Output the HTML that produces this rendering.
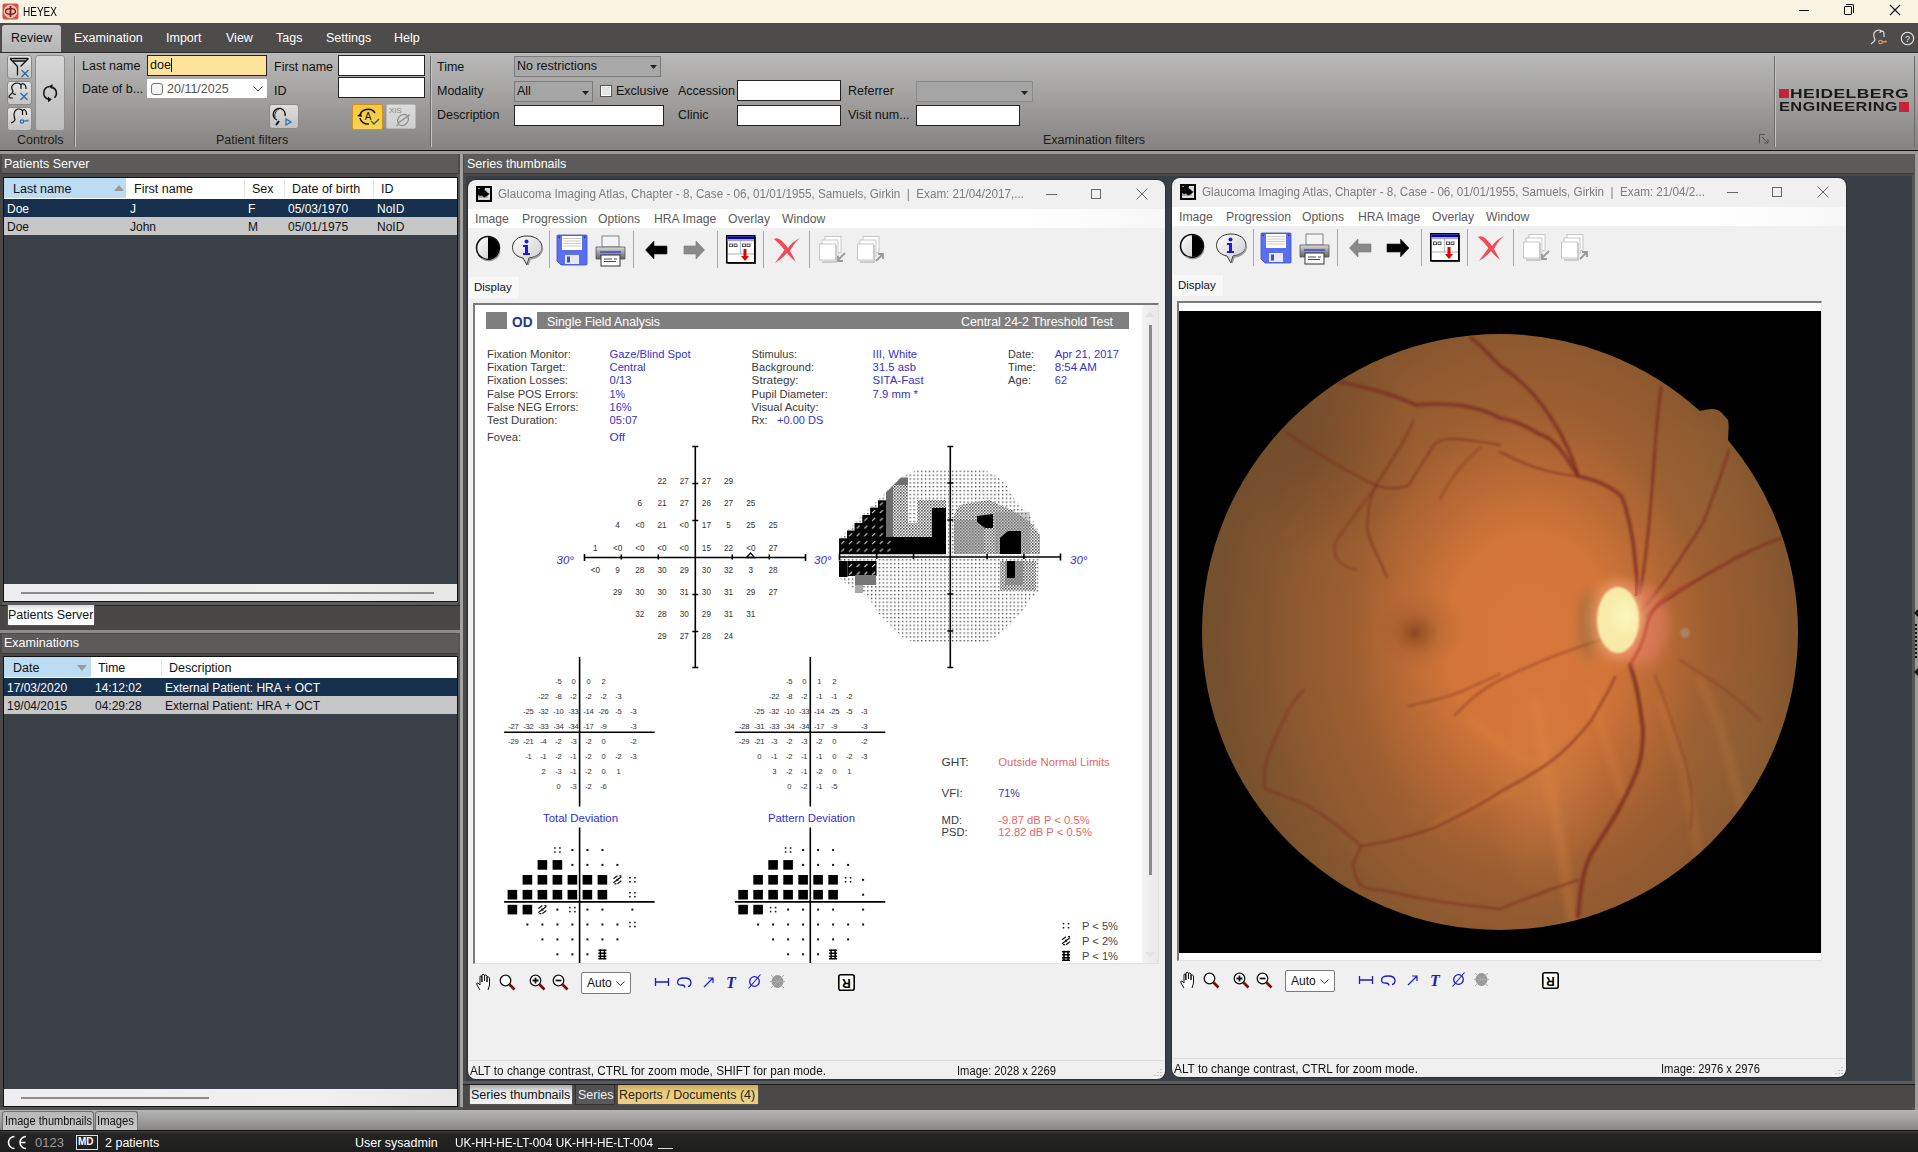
<!DOCTYPE html>
<html><head><meta charset="utf-8">
<style>
*{margin:0;padding:0;box-sizing:border-box}
html,body{width:1918px;height:1152px;overflow:hidden;background:#3b4047;font-family:"Liberation Sans",sans-serif;font-size:12px;color:#000}
.a{position:absolute}
.t{position:absolute;white-space:nowrap;line-height:1}
.fit{transform-origin:0 0}
</style></head><body>
<!-- TITLE BAR -->
<div class="a" style="left:0;top:0;width:1918px;height:23px;background:#f8f3e2"></div>
<svg class="a" style="left:2px;top:3px" width="17" height="17" viewBox="0 0 17 17">
 <rect x="0.5" y="0.5" width="16" height="16" rx="2" fill="#d9533f"/>
 <circle cx="8.5" cy="8.5" r="6.3" fill="#eebcb0" stroke="#fbe5de" stroke-width="0.8"/>
 <ellipse cx="8.5" cy="8.5" rx="5" ry="2.8" fill="none" stroke="#7a1d12" stroke-width="1.3"/>
 <rect x="7.6" y="3" width="1.8" height="11" fill="#7a1d12"/>
</svg>
<span class="t fit" style="left:23px;top:5px;font-size:13px;--w:34px">HEYEX</span>
<div class="a" style="left:1799px;top:10px;width:10px;height:1px;background:#111"></div>
<div class="a" style="left:1844px;top:6px;width:8px;height:9px;border:1px solid #111;border-radius:1px"></div>
<div class="a" style="left:1846px;top:4px;width:8px;height:9px;border-top:1px solid #111;border-right:1px solid #111;border-radius:0 2px 0 0"></div>
<svg class="a" style="left:1889px;top:4px" width="12" height="12"><path d="M1 1L11 11M11 1L1 11" stroke="#111" stroke-width="1.1"/></svg>

<!-- MENU BAR -->
<div class="a" style="left:0;top:23px;width:1918px;height:29px;background:#4e4c4a"></div>
<div class="a" style="left:2px;top:25px;width:59px;height:28px;background:linear-gradient(#c9c9c9,#b4b4b4);border-radius:3px 3px 0 0"></div>
<span class="t" style="left:11px;top:32px;font-size:12.5px;color:#111">Review</span>
<span class="t" style="left:74px;top:32px;font-size:12.5px;color:#fff">Examination</span>
<span class="t" style="left:166px;top:32px;font-size:12.5px;color:#fff">Import</span>
<span class="t" style="left:226px;top:32px;font-size:12.5px;color:#fff">View</span>
<span class="t" style="left:276px;top:32px;font-size:12.5px;color:#fff">Tags</span>
<span class="t" style="left:326px;top:32px;font-size:12.5px;color:#fff">Settings</span>
<span class="t" style="left:394px;top:32px;font-size:12.5px;color:#fff">Help</span>
<svg class="a" style="left:1870px;top:29px" width="20" height="17" viewBox="0 0 20 17">
 <path d="M1 15 Q4 13 5 11 Q3 7 4 4 Q6 1 9 1 Q11 1 12 3 M10 4 Q10 2 12 2 Q14 2 14 5 L14 8" fill="none" stroke="#ddd" stroke-width="1.2"/>
 <circle cx="10.5" cy="13" r="1.8" fill="none" stroke="#f0a060" stroke-width="1.1"/><path d="M12 13H16V11.5M14 13V12" stroke="#f0a060" stroke-width="1.1" fill="none"/>
</svg>
<svg class="a" style="left:1900px;top:31px" width="15" height="15"><circle cx="7.5" cy="7.5" r="6.2" fill="none" stroke="#eee" stroke-width="1.1"/><text x="7.5" y="11" font-size="9" fill="#eee" text-anchor="middle" font-family="Liberation Sans">?</text></svg>

<!-- RIBBON -->
<div class="a" style="left:0;top:52px;width:1918px;height:98px;background:linear-gradient(#bababa,#a09f9d 50%,#858381)"></div>
<div class="a" style="left:0;top:52px;width:1918px;height:1px;background:#2d2d2d"></div>
<div class="a" style="left:0;top:150px;width:1918px;height:1px;background:#111"></div>
<div class="a" style="left:0;top:151px;width:1918px;height:3px;background:#9a9a9a"></div>
<!-- controls group -->
<div class="a" style="left:7px;top:55px;width:25px;height:24px;border:1px solid #8a8a8a;border-radius:3px;background:linear-gradient(#e2e2e2,#c4c4c4)"></div>
<svg class="a" style="left:7px;top:55px" width="25" height="24" viewBox="0 0 25 24"><path d="M3 3.5H21.5M5.5 6H19M3 3.5L10.5 11.5V20.5M21.5 3.5L13.5 11.5" fill="none" stroke="#111" stroke-width="1.3"/><path d="M14.5 15L21.5 22M21.5 15L14.5 22" stroke="#2a6aa8" stroke-width="1.3"/></svg>
<div class="a" style="left:7px;top:81px;width:25px;height:24px;border:1px solid #8a8a8a;border-radius:3px;background:linear-gradient(#e2e2e2,#c4c4c4)"></div>
<svg class="a" style="left:7px;top:81px" width="25" height="24" viewBox="0 0 25 24"><path d="M6 17H3Q1 16 3 14Q6 12 6 10Q4 7 5 5Q7 2 10 2Q13 2 14 4V8M14 4Q15 2 17 3Q19 4 19 7V8M6 12Q7 14 9 13" fill="none" stroke="#111" stroke-width="1.2"/><path d="M13.5 12L20.5 19M20.5 12L13.5 19" stroke="#2a6aa8" stroke-width="1.3"/></svg>
<div class="a" style="left:7px;top:107px;width:25px;height:24px;border:1px solid #8a8a8a;border-radius:3px;background:linear-gradient(#e2e2e2,#c4c4c4)"></div>
<svg class="a" style="left:7px;top:107px" width="25" height="24" viewBox="0 0 25 24"><path d="M4 16Q7 15 8 13Q7 9 7 7Q8 2 12 2Q15 2 15.5 4V8M15.5 4Q16.5 2 18 3Q19.5 4 19.5 7V8" fill="none" stroke="#111" stroke-width="1.2"/><circle cx="15" cy="14.5" r="1.7" fill="none" stroke="#2a6aa8" stroke-width="1.2"/><path d="M16.7 14H21V12.5M19 14V13" stroke="#2a6aa8" stroke-width="1.1" fill="none"/></svg>
<div class="a" style="left:35px;top:55px;width:30px;height:76px;border:1px solid #8f8f8f;border-radius:3px;background:linear-gradient(#d6d6d6,#bdbdbd)"></div>
<svg class="a" style="left:40px;top:83px" width="20" height="20" viewBox="0 0 20 20"><path d="M9.5 3.6A6.5 6.5 0 0 0 8.5 16.3" fill="none" stroke="#111" stroke-width="1.5"/><path d="M8 13.8L11.8 16.6L8 19.2Z" fill="#111"/><path d="M14.5 14.8A6.5 6.5 0 0 0 12.5 4.2" fill="none" stroke="#111" stroke-width="1.5"/><path d="M12.5 1L8.8 3.6L12.5 6.2Z" fill="#111"/></svg>
<span class="t" style="left:17px;top:134px;font-size:12.5px;color:#1a1a1a">Controls</span>
<div class="a" style="left:74px;top:56px;width:1px;height:91px;background:#6a6a6a"></div>
<div class="a" style="left:75px;top:56px;width:1px;height:91px;background:#c4c4c4"></div>

<!-- patient filters -->
<span class="t" style="left:82px;top:60px;font-size:12.5px;color:#111">Last name</span>
<div class="a" style="left:147px;top:55px;width:120px;height:21px;background:#fee49a;border:1px solid #222"></div>
<span class="t" style="left:150px;top:59px;font-size:12.5px;color:#111">doe</span>
<div class="a" style="left:171px;top:58px;width:1px;height:14px;background:#111"></div>
<span class="t" style="left:82px;top:83px;font-size:12.5px;color:#111">Date of b...</span>
<div class="a" style="left:147px;top:79px;width:120px;height:19px;background:#fff"></div>
<div class="a" style="left:151px;top:83px;width:12px;height:12px;border:1px solid #777;border-radius:3px;background:#f4f4f4"></div>
<span class="t" style="left:167px;top:83px;font-size:12.5px;color:#555">20/11/2025</span>
<svg class="a" style="left:253px;top:86px" width="10" height="6"><path d="M0.5 0.5L5 5L9.5 0.5" fill="none" stroke="#444" stroke-width="1"/></svg>
<span class="t" style="left:274px;top:61px;font-size:12.5px;color:#111">First name</span>
<div class="a" style="left:338px;top:55px;width:87px;height:21px;background:#fff;border:1px solid #222"></div>
<span class="t" style="left:274px;top:85px;font-size:12.5px;color:#111">ID</span>
<div class="a" style="left:338px;top:77px;width:87px;height:21px;background:#fff;border:1px solid #222"></div>
<div class="a" style="left:269px;top:104px;width:30px;height:25px;border:1px solid #8a8a8a;border-radius:3px;background:linear-gradient(#dedede,#c2c2c2)"></div>
<svg class="a" style="left:272px;top:106px" width="24" height="21" viewBox="0 0 24 21"><path d="M5 14A6 6 0 1 1 13 10" fill="none" stroke="#111" stroke-width="1.3"/><path d="M3 12A8 8 0 0 1 9 2" fill="none" stroke="#111" stroke-width="0.9"/><path d="M7 15L4 19" stroke="#111" stroke-width="2"/><path d="M14 13L19 16L14 19Z" fill="none" stroke="#2a6aa8" stroke-width="1.2"/></svg>
<div class="a" style="left:352px;top:104px;width:31px;height:26px;border:1px solid #c9941f;border-radius:2px;background:linear-gradient(#f9c73c,#fbd452)"></div>
<svg class="a" style="left:355px;top:107px" width="26" height="20" viewBox="0 0 26 20"><path d="M5 9A8 7 0 0 1 20 6" fill="none" stroke="#111" stroke-width="1.5"/><path d="M5 11A8 7 0 0 0 14 17" fill="none" stroke="#111" stroke-width="1.5"/><path d="M2 9L6 6L7 10Z" fill="#111"/><text x="13" y="13" font-size="10" font-family="Liberation Sans" text-anchor="middle" fill="#111">A</text><path d="M16 14L19 17L24 12" fill="none" stroke="#2b6a5a" stroke-width="1.5"/></svg>
<div class="a" style="left:386px;top:104px;width:30px;height:25px;border:1px solid #b8b8b8;border-radius:2px;background:linear-gradient(#dcdcdc,#cfcfcf)"></div>
<span class="t" style="left:389px;top:107px;font-size:8px;color:#888">XIS</span>
<svg class="a" style="left:395px;top:112px" width="16" height="16" viewBox="0 0 16 16"><ellipse cx="8" cy="8" rx="5" ry="6" transform="rotate(40 8 8)" fill="none" stroke="#8a8a8a" stroke-width="1.2"/><path d="M3 11L13 4M1.5 14L3 12.5M13 4L14.5 2.5" stroke="#8a8a8a" stroke-width="1.2"/></svg>
<span class="t" style="left:216px;top:134px;font-size:12.5px;color:#1a1a1a">Patient filters</span>
<div class="a" style="left:430px;top:56px;width:1px;height:91px;background:#6a6a6a"></div>
<div class="a" style="left:431px;top:56px;width:1px;height:91px;background:#c4c4c4"></div>

<!-- examination filters -->
<span class="t" style="left:437px;top:61px;font-size:12.5px;color:#111">Time</span>
<div class="a" style="left:514px;top:56px;width:147px;height:21px;border:1px solid #7a7a7a;background:#aaa9a9"></div>
<span class="t" style="left:517px;top:60px;font-size:12.5px;color:#111">No restrictions</span>
<svg class="a" style="left:650px;top:65px" width="7" height="4"><path d="M0 0H7L3.5 4Z" fill="#222"/></svg>
<span class="t" style="left:437px;top:85px;font-size:12.5px;color:#111">Modality</span>
<div class="a" style="left:514px;top:81px;width:79px;height:21px;border:1px solid #7a7a7a;background:#a6a6a6"></div>
<span class="t" style="left:517px;top:85px;font-size:12.5px;color:#111">All</span>
<svg class="a" style="left:582px;top:91px" width="7" height="4"><path d="M0 0H7L3.5 4Z" fill="#222"/></svg>
<div class="a" style="left:600px;top:85px;width:12px;height:12px;border:1px solid #555;background:#e4e4e4;box-shadow:inset 0 0 0 1px #fff"></div>
<span class="t" style="left:616px;top:85px;font-size:12.5px;color:#111">Exclusive</span>
<span class="t" style="left:437px;top:109px;font-size:12.5px;color:#111">Description</span>
<div class="a" style="left:514px;top:105px;width:150px;height:21px;background:#fff;border:1px solid #222"></div>
<span class="t" style="left:678px;top:85px;font-size:12.5px;color:#111">Accession</span>
<div class="a" style="left:737px;top:80px;width:104px;height:21px;background:#fff;border:1px solid #222"></div>
<span class="t" style="left:678px;top:109px;font-size:12.5px;color:#111">Clinic</span>
<div class="a" style="left:737px;top:105px;width:104px;height:21px;background:#fff;border:1px solid #222"></div>
<span class="t" style="left:848px;top:85px;font-size:12.5px;color:#111">Referrer</span>
<div class="a" style="left:916px;top:81px;width:117px;height:21px;border:1px solid #8a8a8a;background:#a5a5a5"></div>
<svg class="a" style="left:1021px;top:91px" width="7" height="4"><path d="M0 0H7L3.5 4Z" fill="#222"/></svg>
<span class="t" style="left:848px;top:109px;font-size:12.5px;color:#111">Visit num...</span>
<div class="a" style="left:916px;top:105px;width:104px;height:21px;background:#fff;border:1px solid #222"></div>
<span class="t" style="left:1043px;top:134px;font-size:12.5px;color:#1a1a1a">Examination filters</span>
<svg class="a" style="left:1759px;top:134px" width="10" height="10"><path d="M0.5 9.5V0.5H6" fill="none" stroke="#555" stroke-width="1"/><path d="M3 3L9 9M9 5V9H5" fill="none" stroke="#555" stroke-width="1"/></svg>
<div class="a" style="left:1774px;top:56px;width:1px;height:91px;background:#6a6a6a"></div>
<div class="a" style="left:1775px;top:56px;width:1px;height:91px;background:#c4c4c4"></div>
<div class="a" style="left:1914px;top:56px;width:1px;height:91px;background:#6a6a6a"></div>
<!-- logo -->
<div class="a" style="left:1779px;top:89px;width:10px;height:9px;background:#c8213c"></div>
<span class="t fit" style="left:1790px;top:88px;font-size:12px;font-weight:700;color:#1a1a1a;letter-spacing:0.3px;--w:119px">HEIDELBERG</span>
<span class="t fit" style="left:1779px;top:101px;font-size:12px;font-weight:700;color:#1a1a1a;letter-spacing:0.3px;--w:119px">ENGINEERING</span>
<div class="a" style="left:1899px;top:102px;width:10px;height:10px;background:#c8213c"></div>


<!-- LEFT PANEL -->
<!-- left panel frame -->
<div class="a" style="left:0;top:154px;width:462px;height:952px;background:#4b4948"></div>
<div class="a" style="left:456px;top:174px;width:4px;height:933px;background:#555"></div>
<div class="a" style="left:460px;top:154px;width:3px;height:956px;background:#a2a2a2"></div>
<div class="a" style="left:2px;top:154px;width:456px;height:20px;background:#5c5b5a;border-bottom:1px solid #3a3a3a"></div>
<span class="t" style="left:4px;top:158px;font-size:12.5px;color:#fff">Patients Server</span>
<div class="a" style="left:3px;top:177px;width:455px;height:425px;background:#3b4047;border:1px solid #111"></div>
<div class="a" style="left:4px;top:178px;width:453px;height:21px;background:#fff"></div>
<div class="a" style="left:4px;top:178px;width:122px;height:20px;background:#bcdcf4"></div>
<svg class="a" style="left:114px;top:185px" width="10" height="6"><path d="M0 6H10L5 0Z" fill="#9a9a9a"/></svg>
<div class="a" style="left:244px;top:180px;width:1px;height:18px;background:#e6e6e6"></div>
<div class="a" style="left:284px;top:180px;width:1px;height:18px;background:#e6e6e6"></div>
<div class="a" style="left:373px;top:180px;width:1px;height:18px;background:#e6e6e6"></div>
<span class="t" style="left:13px;top:183px;font-size:12.5px;color:#111">Last name</span>
<span class="t" style="left:134px;top:183px;font-size:12.5px;color:#111">First name</span>
<span class="t" style="left:252px;top:183px;font-size:12.5px;color:#111">Sex</span>
<span class="t" style="left:292px;top:183px;font-size:12.5px;color:#111">Date of birth</span>
<span class="t" style="left:381px;top:183px;font-size:12.5px;color:#111">ID</span>
<div class="a" style="left:4px;top:199px;width:453px;height:18px;background:#16304e"></div>
<div class="a" style="left:4px;top:217px;width:453px;height:18px;background:#c7c7c7"></div>
<span class="t" style="left:7px;top:203px;font-size:12px;color:#fff">Doe</span>
<span class="t" style="left:130px;top:203px;font-size:12px;color:#fff">J</span>
<span class="t" style="left:248px;top:203px;font-size:12px;color:#fff">F</span>
<span class="t" style="left:288px;top:203px;font-size:12px;color:#fff">05/03/1970</span>
<span class="t" style="left:377px;top:203px;font-size:12px;color:#fff">NoID</span>
<span class="t" style="left:7px;top:221px;font-size:12px;color:#111">Doe</span>
<span class="t" style="left:130px;top:221px;font-size:12px;color:#111">John</span>
<span class="t" style="left:248px;top:221px;font-size:12px;color:#111">M</span>
<span class="t" style="left:288px;top:221px;font-size:12px;color:#111">05/01/1975</span>
<span class="t" style="left:377px;top:221px;font-size:12px;color:#111">NoID</span>
<div class="a" style="left:4px;top:584px;width:453px;height:17px;background:linear-gradient(90deg,#eeeef0,#f0f0f0 70%,#e6e6e6)"></div>
<div class="a" style="left:21px;top:592px;width:413px;height:2px;background:#8c8c8c"></div>
<!-- tab strip -->
<div class="a" style="left:0;top:602px;width:460px;height:28px;background:#484746"></div>
<div class="a" style="left:2px;top:602px;width:456px;height:3px;background:#5b5b5b"></div>
<div class="a" style="left:0;top:605px;width:460px;height:1px;background:#262626"></div>
<div class="a" style="left:7px;top:605px;width:88px;height:21px;background:linear-gradient(#d9d9d9,#fff 30%,#fff);border:1px solid #555;border-top:0;border-radius:0 0 2px 2px"></div>
<span class="t" style="left:8px;top:609px;font-size:12.5px;color:#111">Patients Server</span>
<div class="a" style="left:0;top:630px;width:460px;height:3px;background:#8c8c8c"></div>
<!-- examinations -->
<div class="a" style="left:2px;top:634px;width:456px;height:20px;background:#5c5b5a;border-bottom:1px solid #3a3a3a"></div>
<span class="t" style="left:4px;top:637px;font-size:12.5px;color:#fff">Examinations</span>
<div class="a" style="left:3px;top:656px;width:455px;height:451px;background:#3b4047;border:1px solid #111"></div>
<div class="a" style="left:4px;top:657px;width:453px;height:21px;background:#fff"></div>
<div class="a" style="left:4px;top:657px;width:87px;height:20px;background:#bcdcf4"></div>
<svg class="a" style="left:77px;top:665px" width="10" height="6"><path d="M0 0H10L5 6Z" fill="#9a9a9a"/></svg>
<div class="a" style="left:161px;top:659px;width:1px;height:18px;background:#e6e6e6"></div>
<span class="t" style="left:13px;top:662px;font-size:12.5px;color:#111">Date</span>
<span class="t" style="left:98px;top:662px;font-size:12.5px;color:#111">Time</span>
<span class="t" style="left:169px;top:662px;font-size:12.5px;color:#111">Description</span>
<div class="a" style="left:4px;top:678px;width:453px;height:18px;background:#16304e"></div>
<div class="a" style="left:4px;top:696px;width:453px;height:18px;background:#c7c7c7"></div>
<span class="t" style="left:7px;top:682px;font-size:12px;color:#fff">17/03/2020</span>
<span class="t" style="left:95px;top:682px;font-size:12px;color:#fff">14:12:02</span>
<span class="t" style="left:165px;top:682px;font-size:12px;color:#fff">External Patient: HRA + OCT</span>
<span class="t" style="left:7px;top:700px;font-size:12px;color:#111">19/04/2015</span>
<span class="t" style="left:95px;top:700px;font-size:12px;color:#111">04:29:28</span>
<span class="t" style="left:165px;top:700px;font-size:12px;color:#111">External Patient: HRA + OCT</span>
<div class="a" style="left:4px;top:1089px;width:453px;height:17px;background:linear-gradient(90deg,#eeeef0,#f0f0f0 70%,#e6e6e6)"></div>
<div class="a" style="left:21px;top:1097px;width:188px;height:2px;background:#8c8c8c"></div>
<!-- bottom strip -->
<div class="a" style="left:0;top:1107px;width:1918px;height:3px;background:#525252"></div>
<div class="a" style="left:0;top:1110px;width:1918px;height:20px;background:linear-gradient(#b5b5b5,#a19f9d 50%,#888684)"></div>
<div class="a" style="left:2px;top:1111px;width:92px;height:20px;border:1px solid #707070;border-bottom:0;border-radius:3px 3px 0 0;background:linear-gradient(#b8b8b8,#c8c8c8)"></div>
<span class="t fit" style="left:5px;top:1115px;font-size:12.5px;color:#111;--w:87px">Image thumbnails</span>
<div class="a" style="left:95px;top:1111px;width:43px;height:20px;border:1px solid #707070;border-bottom:0;border-radius:3px 3px 0 0;background:linear-gradient(#b8b8b8,#c8c8c8)"></div>
<span class="t fit" style="left:97px;top:1115px;font-size:12.5px;color:#111;--w:37px">Images</span>


<!-- RIGHT PANEL -->
<div class="a" style="left:463px;top:154px;width:1455px;height:956px;background:#4b4948"></div>
<div class="a" style="left:1912px;top:154px;width:3px;height:956px;background:#555"></div>
<div class="a" style="left:1915px;top:154px;width:3px;height:956px;background:#9a9a9a"></div>
<svg class="a" style="left:1914px;top:608px" width="4" height="70" viewBox="0 0 4 70"><path d="M4 1L0 5L4 9Z M4 60L0 64L4 68Z" fill="#111"/><rect x="1" y="16" width="2" height="2" fill="#111"/><rect x="1" y="20" width="2" height="2" fill="#111"/><rect x="1" y="24" width="2" height="2" fill="#111"/><rect x="1" y="28" width="2" height="2" fill="#111"/><rect x="1" y="32" width="2" height="2" fill="#111"/><rect x="1" y="36" width="2" height="2" fill="#111"/><rect x="1" y="40" width="2" height="2" fill="#111"/><rect x="1" y="44" width="2" height="2" fill="#111"/><rect x="1" y="48" width="2" height="2" fill="#111"/></svg>
<div class="a" style="left:464px;top:154px;width:1450px;height:20px;background:#5c5b5a;border-bottom:1px solid #3a3a3a"></div>
<span class="t" style="left:467px;top:158px;font-size:12.5px;color:#fff;">Series thumbnails</span>
<div class="a" style="left:466px;top:176px;width:1446px;height:905px;background:#3a3f46"></div>
<svg width="0" height="0" style="position:absolute"><defs><linearGradient id="gwhite" x1="0" y1="0" x2="1" y2="1"><stop offset="0" stop-color="#fff"/><stop offset="1" stop-color="#c8c8c8"/></linearGradient><linearGradient id="gprint" x1="0" y1="0" x2="0" y2="1"><stop offset="0" stop-color="#ddd"/><stop offset="0.5" stop-color="#999"/><stop offset="1" stop-color="#666"/></linearGradient></defs></svg>
<div class="a" style="left:468px;top:180px;width:697px;height:899px;background:#f0f0f0;border-radius:8px;box-shadow:0 0 0 1px rgba(0,0,0,0.25)"></div>
<svg class="a" style="left:476px;top:186px" width="16" height="16" viewBox="0 0 16 16"><rect x="0" y="0" width="16" height="16" fill="#000"/><path d="M9 2H14V8L12 7L10 5L8.5 4Z" fill="#d8d8d8"/><path d="M2 9L4 10L6 9.5L8 11.5L11 10L14 7V13.5H2Z" fill="#a8a8a8"/><path d="M2 12.2H14V13.8H2Z" fill="#f4f4f4"/><path d="M11 11L14 8V12Z" fill="#eee"/><rect x="2" y="2" width="2" height="1" fill="#999"/></svg>
<span class="t fit" style="left:498px;top:188px;font-size:12.5px;color:#7c7c7c;--w:526px">Glaucoma Imaging Atlas, Chapter - 8, Case - 06, 01/01/1955, Samuels, Girkin&nbsp; |&nbsp; Exam: 21/04/2017,...</span>
<div class="a" style="left:1046px;top:194px;width:11px;height:1px;background:#666"></div>
<div class="a" style="left:1091px;top:189px;width:10px;height:10px;border:1px solid #666"></div>
<svg class="a" style="left:1136px;top:188px" width="12" height="12" viewBox="0 0 12 12"><path d="M0.5 0.5L11.5 11.5M11.5 0.5L0.5 11.5" stroke="#666" stroke-width="1"/></svg>
<div class="a" style="left:468px;top:209px;width:697px;height:19px;background:linear-gradient(90deg,#fff 0%,#fff 80%,#f7f7f7)"></div>
<span class="t" style="left:475px;top:213px;font-size:12.2px;color:#5a5a5a;">Image</span>
<span class="t" style="left:522px;top:213px;font-size:12.2px;color:#5a5a5a;">Progression</span>
<span class="t" style="left:598px;top:213px;font-size:12.2px;color:#5a5a5a;">Options</span>
<span class="t" style="left:654px;top:213px;font-size:12.2px;color:#5a5a5a;">HRA Image</span>
<span class="t" style="left:728px;top:213px;font-size:12.2px;color:#5a5a5a;">Overlay</span>
<span class="t" style="left:782px;top:213px;font-size:12.2px;color:#5a5a5a;">Window</span>
<svg class="a" style="left:475px;top:235px" width="27" height="27" viewBox="0 0 27 27"><circle cx="13" cy="13" r="11.5" fill="url(#gwhite)" stroke="#111" stroke-width="1.6"/><path d="M13 2A11 11 0 0 1 13 24Z" fill="#000"/><path d="M24 15A11.5 11.5 0 0 1 6 22" fill="none" stroke="#999" stroke-width="1.2" transform="translate(1,1.5)"/></svg>
<svg class="a" style="left:511px;top:234px" width="33" height="33" viewBox="0 0 33 33"><path d="M16 2C7 2 1.5 7 1.5 13.5C1.5 19 6 23 12 24L16 31L18 24C26 23 31 19 31 13.5C31 7 25 2 16 2Z" fill="url(#gwhite)" stroke="#333" stroke-width="1"/><path d="M31.5 14C31 20 27 24 19 25L17 31" fill="none" stroke="#999" stroke-width="1.6"/><circle cx="15.5" cy="7.5" r="2" fill="#1a1ae6"/><path d="M12 11H17V19H19V21H12V19H14V13H12Z" fill="#1a1ae6"/></svg>
<div class="a" style="left:549px;top:231px;width:1px;height:37px;background:#a8a8a8"></div>
<svg class="a" style="left:556px;top:234px" width="32" height="32" viewBox="0 0 32 32"><path d="M1 2Q1 1 2 1H30Q31 1 31 2V30Q31 31 30 31H5L1 27Z" fill="#5a6ef0" stroke="#3d4fc9" stroke-width="0.8"/><rect x="6" y="2" width="20" height="14" fill="#fff"/><path d="M7 4.5H25M7 7H25M7 9.5H25M7 12H25" stroke="#bbb" stroke-width="0.8"/><rect x="9" y="21" width="14" height="9" fill="#e8e8f8"/><rect x="11" y="22.5" width="3" height="6" fill="#3d4fc9"/><rect x="2.5" y="2.5" width="1.3" height="1.3" fill="#223"/><rect x="28" y="2.5" width="1.3" height="1.3" fill="#223"/></svg>
<svg class="a" style="left:595px;top:235px" width="31" height="32" viewBox="0 0 31 32"><rect x="7" y="1" width="17" height="11" fill="#f4f4f4" stroke="#666" stroke-width="0.8"/><path d="M1 12H30V24H1Z" fill="url(#gprint)" stroke="#555" stroke-width="0.8"/><rect x="5" y="16" width="21" height="2" fill="#5a5ac8"/><rect x="6" y="20" width="19" height="11" fill="#fff" stroke="#333" stroke-width="1"/><path d="M9 24H17M9 26.5H21M19 24H22" stroke="#333" stroke-width="0.9"/></svg>
<div class="a" style="left:633px;top:231px;width:1px;height:37px;background:#a8a8a8"></div>
<svg class="a" style="left:645px;top:240px" width="23" height="20" viewBox="0 0 23 20"><path d="M0.5 10L9 1V6H22V14H9V19Z" fill="#000" stroke="#222" stroke-width="0.6"/></svg>
<svg class="a" style="left:683px;top:240px" width="22" height="20" viewBox="0 0 22 20"><path d="M21.5 10L13 1V6H1V14H13V19Z" fill="#8a8a8a" stroke="#777" stroke-width="0.6"/></svg>
<div class="a" style="left:717px;top:231px;width:1px;height:37px;background:#a8a8a8"></div>
<svg class="a" style="left:726px;top:235px" width="31" height="30" viewBox="0 0 31 30"><rect x="2" y="2" width="28" height="27" fill="#555"/><rect x="0.8" y="0.8" width="28" height="27" fill="#fff" stroke="#000" stroke-width="1.6"/><rect x="1.6" y="1.6" width="26.4" height="2.6" fill="#0000d0"/><rect x="1.6" y="4.2" width="26.4" height="2" fill="#a8a8a8"/><path d="M14.5 6V19" stroke="#aaa" stroke-width="0.8"/><path d="M1.6 19H28" stroke="#999" stroke-width="0.8"/><rect x="3.5" y="9" width="3" height="2.6" fill="none" stroke="#333" stroke-width="0.8"/><rect x="8" y="9" width="3" height="2.6" fill="none" stroke="#333" stroke-width="0.8"/><rect x="16.5" y="9" width="3" height="2.6" fill="none" stroke="#333" stroke-width="0.8"/><rect x="21" y="9" width="3" height="2.6" fill="none" stroke="#333" stroke-width="0.8"/><path d="M17.5 14V21H15L19 26L23 21H20.5V14Z" fill="#e00000"/></svg>
<div class="a" style="left:763px;top:231px;width:1px;height:37px;background:#a8a8a8"></div>
<svg class="a" style="left:772px;top:237px" width="29" height="27" viewBox="0 0 29 27"><path d="M2 2Q6 0 10 4Q14 8 16 11Q20 5 28 1Q22 6 18 14Q21 19 24 25Q19 21 15 16Q10 22 3 26Q8 19 12.5 13Q8 7 2 2Z" fill="#ef4a55"/></svg>
<div class="a" style="left:809px;top:231px;width:1px;height:37px;background:#a8a8a8"></div>
<svg class="a" style="left:819px;top:236px" width="28" height="28" viewBox="0 0 28 28"><rect x="6" y="0.5" width="16" height="16" fill="#fff" stroke="#bbb" stroke-width="0.8"/><rect x="3" y="4" width="16" height="16" fill="#fff" stroke="#bbb" stroke-width="0.8"/><rect x="0.5" y="8" width="16" height="16" fill="#fff" stroke="#bbb" stroke-width="0.8"/><path d="M17 9V26H3" fill="none" stroke="#ccc" stroke-width="2"/><path d="M26 17L19 24M19 20V25H24" fill="none" stroke="#999" stroke-width="1.8"/></svg>
<svg class="a" style="left:857px;top:236px" width="28" height="28" viewBox="0 0 28 28"><rect x="6" y="0.5" width="16" height="16" fill="#fff" stroke="#bbb" stroke-width="0.8"/><rect x="3" y="4" width="16" height="16" fill="#fff" stroke="#bbb" stroke-width="0.8"/><rect x="0.5" y="8" width="16" height="16" fill="#fff" stroke="#bbb" stroke-width="0.8"/><path d="M17 9V26H3" fill="none" stroke="#ccc" stroke-width="2"/><path d="M19 25L26 18M21 18H26V23" fill="none" stroke="#999" stroke-width="1.8"/></svg>
<div class="a" style="left:469px;top:277px;width:50px;height:21px;background:#f8f8f8"></div>
<span class="t" style="left:474px;top:282px;font-size:11.5px;color:#111;">Display</span>
<div class="a" style="left:473px;top:303px;width:686px;height:661px;background:#fff;border-top:2px solid #7a7a7a;border-left:2px solid #7a7a7a;border-right:1px solid #e0e0e0;border-bottom:1px solid #e0e0e0"></div>
<svg class="a" style="left:475px;top:305px" width="667" height="658" viewBox="475 305 667 658" font-family="Liberation Sans">
<defs>
<pattern id="pdots" x="0" y="0" width="3.85" height="3.85" patternUnits="userSpaceOnUse"><rect x="1" y="1" width="1.3" height="1.3" fill="#333"/></pattern>
<pattern id="pgray" x="0" y="0" width="3" height="3" patternUnits="userSpaceOnUse"><rect width="3" height="3" fill="#fff"/><rect x="0" y="0" width="1.6" height="1.6" fill="#555"/><rect x="1.5" y="1.5" width="1.5" height="1.5" fill="#777"/></pattern>
<pattern id="pdark" x="0" y="0" width="7.7" height="7.7" patternUnits="userSpaceOnUse"><rect width="7.7" height="7.7" fill="#000"/><path d="M2 5L5 2" stroke="#fff" stroke-width="1"/></pattern>
</defs>
<rect x="486" y="312" width="21" height="17" fill="#7f7f7f"/>
<text x="512" y="327" font-size="14.5" fill="#24358a" text-anchor="start" font-weight="700" textLength="20.5" lengthAdjust="spacingAndGlyphs">OD</text>
<rect x="537" y="312" width="592" height="17" fill="#7f7f7f"/>
<text x="547" y="325.5" font-size="12.3" fill="#fff" text-anchor="start" font-weight="400" textLength="113" lengthAdjust="spacingAndGlyphs">Single Field Analysis</text>
<text x="1113" y="325.5" font-size="12.3" fill="#fff" text-anchor="end" font-weight="400" textLength="152" lengthAdjust="spacingAndGlyphs">Central 24-2 Threshold Test</text>
<text x="487" y="357.8" font-size="11.3" fill="#3a3a3a" text-anchor="start" font-weight="400" textLength="84" lengthAdjust="spacingAndGlyphs">Fixation Monitor:</text>
<text x="609.6" y="357.8" font-size="11.3" fill="#3434c4" text-anchor="start" font-weight="400" textLength="81" lengthAdjust="spacingAndGlyphs">Gaze/Blind Spot</text>
<text x="487" y="371" font-size="11.3" fill="#3a3a3a" text-anchor="start" font-weight="400" textLength="78.5" lengthAdjust="spacingAndGlyphs">Fixation Target:</text>
<text x="609.6" y="371" font-size="11.3" fill="#3434c4" text-anchor="start" font-weight="400" textLength="36" lengthAdjust="spacingAndGlyphs">Central</text>
<text x="487" y="384.2" font-size="11.3" fill="#3a3a3a" text-anchor="start" font-weight="400" textLength="81" lengthAdjust="spacingAndGlyphs">Fixation Losses:</text>
<text x="609.6" y="384.2" font-size="11.3" fill="#3434c4" text-anchor="start" font-weight="400" textLength="22" lengthAdjust="spacingAndGlyphs">0/13</text>
<text x="487" y="397.6" font-size="11.3" fill="#3a3a3a" text-anchor="start" font-weight="400" textLength="91.5" lengthAdjust="spacingAndGlyphs">False POS Errors:</text>
<text x="609.6" y="397.6" font-size="11.3" fill="#3434c4" text-anchor="start" font-weight="400" textLength="15.6" lengthAdjust="spacingAndGlyphs">1%</text>
<text x="487" y="410.8" font-size="11.3" fill="#3a3a3a" text-anchor="start" font-weight="400" textLength="91.7" lengthAdjust="spacingAndGlyphs">False NEG Errors:</text>
<text x="609.6" y="410.8" font-size="11.3" fill="#3434c4" text-anchor="start" font-weight="400" textLength="22" lengthAdjust="spacingAndGlyphs">16%</text>
<text x="487" y="424" font-size="11.3" fill="#3a3a3a" text-anchor="start" font-weight="400" textLength="70.3" lengthAdjust="spacingAndGlyphs">Test Duration:</text>
<text x="609.6" y="424" font-size="11.3" fill="#3434c4" text-anchor="start" font-weight="400" textLength="28" lengthAdjust="spacingAndGlyphs">05:07</text>
<text x="487" y="441" font-size="11.3" fill="#3a3a3a" text-anchor="start" font-weight="400" textLength="34" lengthAdjust="spacingAndGlyphs">Fovea:</text>
<text x="609.6" y="441" font-size="11.3" fill="#3434c4" text-anchor="start" font-weight="400" textLength="15.5" lengthAdjust="spacingAndGlyphs">Off</text>
<text x="751.6" y="357.8" font-size="11.3" fill="#3a3a3a" text-anchor="start" font-weight="400" textLength="45.4" lengthAdjust="spacingAndGlyphs">Stimulus:</text>
<text x="872.6" y="357.8" font-size="11.3" fill="#3434c4" text-anchor="start" font-weight="400" textLength="44.5" lengthAdjust="spacingAndGlyphs">III, White</text>
<text x="751.6" y="371" font-size="11.3" fill="#3a3a3a" text-anchor="start" font-weight="400" textLength="62.4" lengthAdjust="spacingAndGlyphs">Background:</text>
<text x="872.6" y="371" font-size="11.3" fill="#3434c4" text-anchor="start" font-weight="400" textLength="43.4" lengthAdjust="spacingAndGlyphs">31.5 asb</text>
<text x="751.6" y="384.2" font-size="11.3" fill="#3a3a3a" text-anchor="start" font-weight="400" textLength="47" lengthAdjust="spacingAndGlyphs">Strategy:</text>
<text x="872.6" y="384.2" font-size="11.3" fill="#3434c4" text-anchor="start" font-weight="400" textLength="51" lengthAdjust="spacingAndGlyphs">SITA-Fast</text>
<text x="751.6" y="397.6" font-size="11.3" fill="#3a3a3a" text-anchor="start" font-weight="400" textLength="76.2" lengthAdjust="spacingAndGlyphs">Pupil Diameter:</text>
<text x="872.6" y="397.6" font-size="11.3" fill="#3434c4" text-anchor="start" font-weight="400" textLength="45.4" lengthAdjust="spacingAndGlyphs">7.9 mm *</text>
<text x="751.6" y="410.8" font-size="11.3" fill="#3a3a3a" text-anchor="start" font-weight="400" textLength="67" lengthAdjust="spacingAndGlyphs">Visual Acuity:</text>
<text x="751.6" y="424" font-size="11.3" fill="#3a3a3a" text-anchor="start" font-weight="400" textLength="16" lengthAdjust="spacingAndGlyphs">Rx:</text>
<text x="777" y="424" font-size="11.3" fill="#3434c4" text-anchor="start" font-weight="400" textLength="46.4" lengthAdjust="spacingAndGlyphs">+0.00 DS</text>
<text x="1008" y="357.8" font-size="11.3" fill="#3a3a3a" text-anchor="start" font-weight="400" textLength="26" lengthAdjust="spacingAndGlyphs">Date:</text>
<text x="1054.8" y="357.8" font-size="11.3" fill="#3434c4" text-anchor="start" font-weight="400" textLength="64.2" lengthAdjust="spacingAndGlyphs">Apr 21, 2017</text>
<text x="1008" y="371" font-size="11.3" fill="#3a3a3a" text-anchor="start" font-weight="400" textLength="27.5" lengthAdjust="spacingAndGlyphs">Time:</text>
<text x="1054.8" y="371" font-size="11.3" fill="#3434c4" text-anchor="start" font-weight="400" textLength="42" lengthAdjust="spacingAndGlyphs">8:54 AM</text>
<text x="1008" y="384.2" font-size="11.3" fill="#3a3a3a" text-anchor="start" font-weight="400" textLength="23" lengthAdjust="spacingAndGlyphs">Age:</text>
<text x="1054.8" y="384.2" font-size="11.3" fill="#3434c4" text-anchor="start" font-weight="400" textLength="12.2" lengthAdjust="spacingAndGlyphs">62</text>
<path d="M695.3 446V668M692.3 446.5H698.3M692.3 667.5H698.3M584 557.5H806M584.5 554.0V561.0M805.5 554.0V561.0" stroke="#000" stroke-width="1.6" fill="none"/>
<path d="M621.3 554.5V559.5M692.3 483.5H698.3" stroke="#000" stroke-width="1.6"/>
<path d="M658.3 554.5V559.5M692.3 520.5H698.3" stroke="#000" stroke-width="1.6"/>
<path d="M732.3 554.5V559.5M692.3 594.5H698.3" stroke="#000" stroke-width="1.6"/>
<path d="M769.3 554.5V559.5M692.3 631.5H698.3" stroke="#000" stroke-width="1.6"/>
<path d="M746.5 557.5L750.5 553.0L754.5 557.5Z" fill="none" stroke="#000" stroke-width="1.3"/>
<text x="556.5" y="563.5" font-size="11.5" fill="#3030d0" text-anchor="start" font-weight="400" font-style="italic">30°</text>
<text x="662.0" y="484.0" font-size="8.2" fill="#333" text-anchor="middle">22</text>
<text x="684.2" y="484.0" font-size="8.2" fill="#333" text-anchor="middle">27</text>
<text x="706.4" y="484.0" font-size="8.2" fill="#333" text-anchor="middle">27</text>
<text x="728.6" y="484.0" font-size="8.2" fill="#333" text-anchor="middle">29</text>
<text x="639.8" y="506.2" font-size="8.2" fill="#333" text-anchor="middle">6</text>
<text x="662.0" y="506.2" font-size="8.2" fill="#333" text-anchor="middle">21</text>
<text x="684.2" y="506.2" font-size="8.2" fill="#333" text-anchor="middle">27</text>
<text x="706.4" y="506.2" font-size="8.2" fill="#333" text-anchor="middle">26</text>
<text x="728.6" y="506.2" font-size="8.2" fill="#333" text-anchor="middle">27</text>
<text x="750.8" y="506.2" font-size="8.2" fill="#333" text-anchor="middle">25</text>
<text x="617.6" y="528.4" font-size="8.2" fill="#333" text-anchor="middle">4</text>
<text x="639.8" y="528.4" font-size="8.2" fill="#333" text-anchor="middle">&lt;0</text>
<text x="662.0" y="528.4" font-size="8.2" fill="#333" text-anchor="middle">21</text>
<text x="684.2" y="528.4" font-size="8.2" fill="#333" text-anchor="middle">&lt;0</text>
<text x="706.4" y="528.4" font-size="8.2" fill="#333" text-anchor="middle">17</text>
<text x="728.6" y="528.4" font-size="8.2" fill="#333" text-anchor="middle">5</text>
<text x="750.8" y="528.4" font-size="8.2" fill="#333" text-anchor="middle">25</text>
<text x="773.0" y="528.4" font-size="8.2" fill="#333" text-anchor="middle">25</text>
<text x="595.4" y="550.5" font-size="8.2" fill="#333" text-anchor="middle">1</text>
<text x="617.6" y="550.5" font-size="8.2" fill="#333" text-anchor="middle">&lt;0</text>
<text x="639.8" y="550.5" font-size="8.2" fill="#333" text-anchor="middle">&lt;0</text>
<text x="662.0" y="550.5" font-size="8.2" fill="#333" text-anchor="middle">&lt;0</text>
<text x="684.2" y="550.5" font-size="8.2" fill="#333" text-anchor="middle">&lt;0</text>
<text x="706.4" y="550.5" font-size="8.2" fill="#333" text-anchor="middle">15</text>
<text x="728.6" y="550.5" font-size="8.2" fill="#333" text-anchor="middle">22</text>
<text x="750.8" y="550.5" font-size="8.2" fill="#333" text-anchor="middle">&lt;0</text>
<text x="773.0" y="550.5" font-size="8.2" fill="#333" text-anchor="middle">27</text>
<text x="595.4" y="572.7" font-size="8.2" fill="#333" text-anchor="middle">&lt;0</text>
<text x="617.6" y="572.7" font-size="8.2" fill="#333" text-anchor="middle">9</text>
<text x="639.8" y="572.7" font-size="8.2" fill="#333" text-anchor="middle">28</text>
<text x="662.0" y="572.7" font-size="8.2" fill="#333" text-anchor="middle">30</text>
<text x="684.2" y="572.7" font-size="8.2" fill="#333" text-anchor="middle">29</text>
<text x="706.4" y="572.7" font-size="8.2" fill="#333" text-anchor="middle">30</text>
<text x="728.6" y="572.7" font-size="8.2" fill="#333" text-anchor="middle">32</text>
<text x="750.8" y="572.7" font-size="8.2" fill="#333" text-anchor="middle">3</text>
<text x="773.0" y="572.7" font-size="8.2" fill="#333" text-anchor="middle">28</text>
<text x="617.6" y="594.9" font-size="8.2" fill="#333" text-anchor="middle">29</text>
<text x="639.8" y="594.9" font-size="8.2" fill="#333" text-anchor="middle">30</text>
<text x="662.0" y="594.9" font-size="8.2" fill="#333" text-anchor="middle">30</text>
<text x="684.2" y="594.9" font-size="8.2" fill="#333" text-anchor="middle">31</text>
<text x="706.4" y="594.9" font-size="8.2" fill="#333" text-anchor="middle">30</text>
<text x="728.6" y="594.9" font-size="8.2" fill="#333" text-anchor="middle">31</text>
<text x="750.8" y="594.9" font-size="8.2" fill="#333" text-anchor="middle">29</text>
<text x="773.0" y="594.9" font-size="8.2" fill="#333" text-anchor="middle">27</text>
<text x="639.8" y="617.1" font-size="8.2" fill="#333" text-anchor="middle">32</text>
<text x="662.0" y="617.1" font-size="8.2" fill="#333" text-anchor="middle">28</text>
<text x="684.2" y="617.1" font-size="8.2" fill="#333" text-anchor="middle">30</text>
<text x="706.4" y="617.1" font-size="8.2" fill="#333" text-anchor="middle">29</text>
<text x="728.6" y="617.1" font-size="8.2" fill="#333" text-anchor="middle">31</text>
<text x="750.8" y="617.1" font-size="8.2" fill="#333" text-anchor="middle">31</text>
<text x="662.0" y="639.3" font-size="8.2" fill="#333" text-anchor="middle">29</text>
<text x="684.2" y="639.3" font-size="8.2" fill="#333" text-anchor="middle">27</text>
<text x="706.4" y="639.3" font-size="8.2" fill="#333" text-anchor="middle">28</text>
<text x="728.6" y="639.3" font-size="8.2" fill="#333" text-anchor="middle">24</text>
<polygon points="917,470 985,470 999,478 1007,486 1015,500 1030,515 1038,530 1040,556 1040,590 1030,600 1022,612 1008,627 999,635 985,644 917,644 901,636 893,628 878,613 870,600 862,592 847,585 839,577 839,539 901,477" fill="url(#pdots)"/>
<rect x="948.8" y="465" width="3" height="184" fill="#fff"/>
<rect x="836" y="555.5" width="226" height="3" fill="#fff"/>
<polygon points="839.2,554.2 839.2,538.6 847,538.6 847,530.7 854.7,530.7 854.7,523 862.5,523 862.5,515 870.3,515 870.3,507.7 878,507.7 878,500.4 886,500.4 886,492.6 893.6,492.6 893.6,537 946,537 946,554.2" fill="#0a0a0a"/>
<polygon points="839.2,554 839.2,538.6 847,538.6 847,530.7 854.7,530.7 854.7,523 862.5,523 862.5,515 870.3,515 870.3,507.7 878,507.7 878,500.4 893.6,500.4 893.6,554" fill="url(#pdark)" opacity="0.9"/>
<polygon points="886,492.6 893.6,485 901,477.4 908,477.4 908,537 886,537" fill="#6e6e6e"/>
<rect x="893" y="485" width="15" height="52" fill="url(#pgray)"/>
<rect x="917" y="500" width="15" height="37" fill="url(#pgray)"/>
<rect x="932" y="500" width="14" height="8" fill="url(#pgray)"/>
<rect x="932" y="508" width="14" height="46" fill="#000"/>
<rect x="908" y="523" width="9" height="14" fill="url(#pgray)"/>
<rect x="893" y="537" width="53" height="17" fill="#000"/>
<polygon points="954,515 960,505 975,502 990,500 1000,505 1012,510 1030,522 1040,535 1040,554 954,554" fill="url(#pgray)"/>
<rect x="954" y="520" width="30" height="34" fill="#8a8a8a" opacity="0.55"/>
<rect x="995" y="512" width="35" height="42" fill="#8a8a8a" opacity="0.45"/>
<polygon points="977,516 993,514 993,528 985,528 977,522" fill="#000"/>
<polygon points="1000,538 1008,531 1021,531 1021,554 1000,554" fill="#000"/>
<rect x="839" y="561" width="8.5" height="16" fill="#000"/>
<rect x="847.5" y="561" width="29" height="15" fill="url(#pdark)"/>
<rect x="855" y="575" width="21" height="10" fill="#777"/>
<rect x="855" y="585" width="8" height="8" fill="#aaa"/>
<rect x="1000" y="561" width="36" height="30" fill="url(#pgray)"/>
<rect x="1005" y="561" width="18" height="24" fill="#777" opacity="0.6"/>
<rect x="1007" y="561" width="8" height="17" fill="#000"/>
<path d="M950.3 446V668M947.3 446.5H953.3M947.3 667.5H953.3M839 557H1061M839.5 553.5V560.5M1060.5 553.5V560.5" stroke="#000" stroke-width="1.6" fill="none"/>
<path d="M876.6999999999999 554V559M947.3 483H953.3" stroke="#000" stroke-width="1.6"/>
<path d="M913.5 554V559M947.3 520H953.3" stroke="#000" stroke-width="1.6"/>
<path d="M987.0999999999999 554V559M947.3 594H953.3" stroke="#000" stroke-width="1.6"/>
<path d="M1023.9 554V559M947.3 631H953.3" stroke="#000" stroke-width="1.6"/>
<text x="814" y="563.5" font-size="11.5" fill="#3030d0" text-anchor="start" font-weight="400" font-style="italic">30°</text>
<text x="1070" y="563.5" font-size="11.5" fill="#3030d0" text-anchor="start" font-weight="400" font-style="italic">30°</text>
<path d="M579.6 657V806.5M504.1 732.2H654.6" stroke="#000" stroke-width="1.6"/>
<text x="558.4" y="684.2" font-size="7.6" fill="#333" text-anchor="middle" letter-spacing="-0.3">-5</text>
<text x="573.4" y="684.2" font-size="7.6" fill="#333" text-anchor="middle" letter-spacing="-0.3">0</text>
<text x="588.4" y="684.2" font-size="7.6" fill="#333" text-anchor="middle" letter-spacing="-0.3">0</text>
<text x="603.4" y="684.2" font-size="7.6" fill="#333" text-anchor="middle" letter-spacing="-0.3">2</text>
<text x="543.4" y="699.1" font-size="7.6" fill="#333" text-anchor="middle" letter-spacing="-0.3">-22</text>
<text x="558.4" y="699.1" font-size="7.6" fill="#333" text-anchor="middle" letter-spacing="-0.3">-8</text>
<text x="573.4" y="699.1" font-size="7.6" fill="#333" text-anchor="middle" letter-spacing="-0.3">-2</text>
<text x="588.4" y="699.1" font-size="7.6" fill="#333" text-anchor="middle" letter-spacing="-0.3">-2</text>
<text x="603.4" y="699.1" font-size="7.6" fill="#333" text-anchor="middle" letter-spacing="-0.3">-2</text>
<text x="618.4" y="699.1" font-size="7.6" fill="#333" text-anchor="middle" letter-spacing="-0.3">-3</text>
<text x="528.4" y="714.0" font-size="7.6" fill="#333" text-anchor="middle" letter-spacing="-0.3">-25</text>
<text x="543.4" y="714.0" font-size="7.6" fill="#333" text-anchor="middle" letter-spacing="-0.3">-32</text>
<text x="558.4" y="714.0" font-size="7.6" fill="#333" text-anchor="middle" letter-spacing="-0.3">-10</text>
<text x="573.4" y="714.0" font-size="7.6" fill="#333" text-anchor="middle" letter-spacing="-0.3">-33</text>
<text x="588.4" y="714.0" font-size="7.6" fill="#333" text-anchor="middle" letter-spacing="-0.3">-14</text>
<text x="603.4" y="714.0" font-size="7.6" fill="#333" text-anchor="middle" letter-spacing="-0.3">-26</text>
<text x="618.4" y="714.0" font-size="7.6" fill="#333" text-anchor="middle" letter-spacing="-0.3">-5</text>
<text x="633.4" y="714.0" font-size="7.6" fill="#333" text-anchor="middle" letter-spacing="-0.3">-3</text>
<text x="513.4" y="728.9" font-size="7.6" fill="#333" text-anchor="middle" letter-spacing="-0.3">-27</text>
<text x="528.4" y="728.9" font-size="7.6" fill="#333" text-anchor="middle" letter-spacing="-0.3">-32</text>
<text x="543.4" y="728.9" font-size="7.6" fill="#333" text-anchor="middle" letter-spacing="-0.3">-33</text>
<text x="558.4" y="728.9" font-size="7.6" fill="#333" text-anchor="middle" letter-spacing="-0.3">-34</text>
<text x="573.4" y="728.9" font-size="7.6" fill="#333" text-anchor="middle" letter-spacing="-0.3">-34</text>
<text x="588.4" y="728.9" font-size="7.6" fill="#333" text-anchor="middle" letter-spacing="-0.3">-17</text>
<text x="603.4" y="728.9" font-size="7.6" fill="#333" text-anchor="middle" letter-spacing="-0.3">-9</text>
<text x="633.4" y="728.9" font-size="7.6" fill="#333" text-anchor="middle" letter-spacing="-0.3">-3</text>
<text x="513.4" y="743.8" font-size="7.6" fill="#333" text-anchor="middle" letter-spacing="-0.3">-29</text>
<text x="528.4" y="743.8" font-size="7.6" fill="#333" text-anchor="middle" letter-spacing="-0.3">-21</text>
<text x="543.4" y="743.8" font-size="7.6" fill="#333" text-anchor="middle" letter-spacing="-0.3">-4</text>
<text x="558.4" y="743.8" font-size="7.6" fill="#333" text-anchor="middle" letter-spacing="-0.3">-2</text>
<text x="573.4" y="743.8" font-size="7.6" fill="#333" text-anchor="middle" letter-spacing="-0.3">-3</text>
<text x="588.4" y="743.8" font-size="7.6" fill="#333" text-anchor="middle" letter-spacing="-0.3">-2</text>
<text x="603.4" y="743.8" font-size="7.6" fill="#333" text-anchor="middle" letter-spacing="-0.3">0</text>
<text x="633.4" y="743.8" font-size="7.6" fill="#333" text-anchor="middle" letter-spacing="-0.3">-2</text>
<text x="528.4" y="758.7" font-size="7.6" fill="#333" text-anchor="middle" letter-spacing="-0.3">-1</text>
<text x="543.4" y="758.7" font-size="7.6" fill="#333" text-anchor="middle" letter-spacing="-0.3">-1</text>
<text x="558.4" y="758.7" font-size="7.6" fill="#333" text-anchor="middle" letter-spacing="-0.3">-2</text>
<text x="573.4" y="758.7" font-size="7.6" fill="#333" text-anchor="middle" letter-spacing="-0.3">-1</text>
<text x="588.4" y="758.7" font-size="7.6" fill="#333" text-anchor="middle" letter-spacing="-0.3">-2</text>
<text x="603.4" y="758.7" font-size="7.6" fill="#333" text-anchor="middle" letter-spacing="-0.3">0</text>
<text x="618.4" y="758.7" font-size="7.6" fill="#333" text-anchor="middle" letter-spacing="-0.3">-2</text>
<text x="633.4" y="758.7" font-size="7.6" fill="#333" text-anchor="middle" letter-spacing="-0.3">-3</text>
<text x="543.4" y="773.6" font-size="7.6" fill="#333" text-anchor="middle" letter-spacing="-0.3">2</text>
<text x="558.4" y="773.6" font-size="7.6" fill="#333" text-anchor="middle" letter-spacing="-0.3">-3</text>
<text x="573.4" y="773.6" font-size="7.6" fill="#333" text-anchor="middle" letter-spacing="-0.3">-1</text>
<text x="588.4" y="773.6" font-size="7.6" fill="#333" text-anchor="middle" letter-spacing="-0.3">-2</text>
<text x="603.4" y="773.6" font-size="7.6" fill="#333" text-anchor="middle" letter-spacing="-0.3">0</text>
<text x="618.4" y="773.6" font-size="7.6" fill="#333" text-anchor="middle" letter-spacing="-0.3">1</text>
<text x="558.4" y="788.5" font-size="7.6" fill="#333" text-anchor="middle" letter-spacing="-0.3">0</text>
<text x="573.4" y="788.5" font-size="7.6" fill="#333" text-anchor="middle" letter-spacing="-0.3">-3</text>
<text x="588.4" y="788.5" font-size="7.6" fill="#333" text-anchor="middle" letter-spacing="-0.3">-2</text>
<text x="603.4" y="788.5" font-size="7.6" fill="#333" text-anchor="middle" letter-spacing="-0.3">-6</text>
<path d="M810.3 657V806.5M734.8 732.2H885.3" stroke="#000" stroke-width="1.6"/>
<text x="789.1" y="684.2" font-size="7.6" fill="#333" text-anchor="middle" letter-spacing="-0.3">-5</text>
<text x="804.1" y="684.2" font-size="7.6" fill="#333" text-anchor="middle" letter-spacing="-0.3">0</text>
<text x="819.1" y="684.2" font-size="7.6" fill="#333" text-anchor="middle" letter-spacing="-0.3">1</text>
<text x="834.1" y="684.2" font-size="7.6" fill="#333" text-anchor="middle" letter-spacing="-0.3">2</text>
<text x="774.1" y="699.1" font-size="7.6" fill="#333" text-anchor="middle" letter-spacing="-0.3">-22</text>
<text x="789.1" y="699.1" font-size="7.6" fill="#333" text-anchor="middle" letter-spacing="-0.3">-8</text>
<text x="804.1" y="699.1" font-size="7.6" fill="#333" text-anchor="middle" letter-spacing="-0.3">-2</text>
<text x="819.1" y="699.1" font-size="7.6" fill="#333" text-anchor="middle" letter-spacing="-0.3">-1</text>
<text x="834.1" y="699.1" font-size="7.6" fill="#333" text-anchor="middle" letter-spacing="-0.3">-1</text>
<text x="849.1" y="699.1" font-size="7.6" fill="#333" text-anchor="middle" letter-spacing="-0.3">-2</text>
<text x="759.1" y="714.0" font-size="7.6" fill="#333" text-anchor="middle" letter-spacing="-0.3">-25</text>
<text x="774.1" y="714.0" font-size="7.6" fill="#333" text-anchor="middle" letter-spacing="-0.3">-32</text>
<text x="789.1" y="714.0" font-size="7.6" fill="#333" text-anchor="middle" letter-spacing="-0.3">-10</text>
<text x="804.1" y="714.0" font-size="7.6" fill="#333" text-anchor="middle" letter-spacing="-0.3">-33</text>
<text x="819.1" y="714.0" font-size="7.6" fill="#333" text-anchor="middle" letter-spacing="-0.3">-14</text>
<text x="834.1" y="714.0" font-size="7.6" fill="#333" text-anchor="middle" letter-spacing="-0.3">-25</text>
<text x="849.1" y="714.0" font-size="7.6" fill="#333" text-anchor="middle" letter-spacing="-0.3">-5</text>
<text x="864.1" y="714.0" font-size="7.6" fill="#333" text-anchor="middle" letter-spacing="-0.3">-3</text>
<text x="744.1" y="728.9" font-size="7.6" fill="#333" text-anchor="middle" letter-spacing="-0.3">-28</text>
<text x="759.1" y="728.9" font-size="7.6" fill="#333" text-anchor="middle" letter-spacing="-0.3">-31</text>
<text x="774.1" y="728.9" font-size="7.6" fill="#333" text-anchor="middle" letter-spacing="-0.3">-33</text>
<text x="789.1" y="728.9" font-size="7.6" fill="#333" text-anchor="middle" letter-spacing="-0.3">-34</text>
<text x="804.1" y="728.9" font-size="7.6" fill="#333" text-anchor="middle" letter-spacing="-0.3">-34</text>
<text x="819.1" y="728.9" font-size="7.6" fill="#333" text-anchor="middle" letter-spacing="-0.3">-17</text>
<text x="834.1" y="728.9" font-size="7.6" fill="#333" text-anchor="middle" letter-spacing="-0.3">-9</text>
<text x="864.1" y="728.9" font-size="7.6" fill="#333" text-anchor="middle" letter-spacing="-0.3">-3</text>
<text x="744.1" y="743.8" font-size="7.6" fill="#333" text-anchor="middle" letter-spacing="-0.3">-29</text>
<text x="759.1" y="743.8" font-size="7.6" fill="#333" text-anchor="middle" letter-spacing="-0.3">-21</text>
<text x="774.1" y="743.8" font-size="7.6" fill="#333" text-anchor="middle" letter-spacing="-0.3">-3</text>
<text x="789.1" y="743.8" font-size="7.6" fill="#333" text-anchor="middle" letter-spacing="-0.3">-2</text>
<text x="804.1" y="743.8" font-size="7.6" fill="#333" text-anchor="middle" letter-spacing="-0.3">-3</text>
<text x="819.1" y="743.8" font-size="7.6" fill="#333" text-anchor="middle" letter-spacing="-0.3">-2</text>
<text x="834.1" y="743.8" font-size="7.6" fill="#333" text-anchor="middle" letter-spacing="-0.3">0</text>
<text x="864.1" y="743.8" font-size="7.6" fill="#333" text-anchor="middle" letter-spacing="-0.3">-2</text>
<text x="759.1" y="758.7" font-size="7.6" fill="#333" text-anchor="middle" letter-spacing="-0.3">0</text>
<text x="774.1" y="758.7" font-size="7.6" fill="#333" text-anchor="middle" letter-spacing="-0.3">-1</text>
<text x="789.1" y="758.7" font-size="7.6" fill="#333" text-anchor="middle" letter-spacing="-0.3">-2</text>
<text x="804.1" y="758.7" font-size="7.6" fill="#333" text-anchor="middle" letter-spacing="-0.3">-1</text>
<text x="819.1" y="758.7" font-size="7.6" fill="#333" text-anchor="middle" letter-spacing="-0.3">-1</text>
<text x="834.1" y="758.7" font-size="7.6" fill="#333" text-anchor="middle" letter-spacing="-0.3">0</text>
<text x="849.1" y="758.7" font-size="7.6" fill="#333" text-anchor="middle" letter-spacing="-0.3">-2</text>
<text x="864.1" y="758.7" font-size="7.6" fill="#333" text-anchor="middle" letter-spacing="-0.3">-3</text>
<text x="774.1" y="773.6" font-size="7.6" fill="#333" text-anchor="middle" letter-spacing="-0.3">3</text>
<text x="789.1" y="773.6" font-size="7.6" fill="#333" text-anchor="middle" letter-spacing="-0.3">-2</text>
<text x="804.1" y="773.6" font-size="7.6" fill="#333" text-anchor="middle" letter-spacing="-0.3">-1</text>
<text x="819.1" y="773.6" font-size="7.6" fill="#333" text-anchor="middle" letter-spacing="-0.3">-2</text>
<text x="834.1" y="773.6" font-size="7.6" fill="#333" text-anchor="middle" letter-spacing="-0.3">0</text>
<text x="849.1" y="773.6" font-size="7.6" fill="#333" text-anchor="middle" letter-spacing="-0.3">1</text>
<text x="789.1" y="788.5" font-size="7.6" fill="#333" text-anchor="middle" letter-spacing="-0.3">0</text>
<text x="804.1" y="788.5" font-size="7.6" fill="#333" text-anchor="middle" letter-spacing="-0.3">-2</text>
<text x="819.1" y="788.5" font-size="7.6" fill="#333" text-anchor="middle" letter-spacing="-0.3">-1</text>
<text x="834.1" y="788.5" font-size="7.6" fill="#333" text-anchor="middle" letter-spacing="-0.3">-5</text>
<text x="580.5" y="822" font-size="11.3" fill="#2f2fd0" text-anchor="middle" font-weight="400" textLength="75" lengthAdjust="spacingAndGlyphs">Total Deviation</text>
<text x="811.5" y="822" font-size="11.3" fill="#2f2fd0" text-anchor="middle" font-weight="400" textLength="87" lengthAdjust="spacingAndGlyphs">Pattern Deviation</text>
<path d="M579.6 827.5V963M504.1 901.9H654.6" stroke="#000" stroke-width="1.6"/>
<rect x="554.1" y="847.2" width="1.6" height="1.6" fill="#222"/><rect x="554.1" y="851.2" width="1.6" height="1.6" fill="#222"/><rect x="559.1" y="847.2" width="1.6" height="1.6" fill="#222"/><rect x="559.1" y="851.2" width="1.6" height="1.6" fill="#222"/>
<rect x="571.4" y="849.0" width="2" height="2" fill="#111"/>
<rect x="586.4" y="849.0" width="2" height="2" fill="#111"/>
<rect x="601.4" y="849.0" width="2" height="2" fill="#111"/>
<rect x="537.6" y="860.1" width="9.6" height="9.6" fill="#000"/>
<rect x="552.6" y="860.1" width="9.6" height="9.6" fill="#000"/>
<rect x="571.4" y="863.9" width="2" height="2" fill="#111"/>
<rect x="586.4" y="863.9" width="2" height="2" fill="#111"/>
<rect x="601.4" y="863.9" width="2" height="2" fill="#111"/>
<rect x="616.4" y="863.9" width="2" height="2" fill="#111"/>
<rect x="522.6" y="875.0" width="9.6" height="9.6" fill="#000"/>
<rect x="537.6" y="875.0" width="9.6" height="9.6" fill="#000"/>
<rect x="552.6" y="875.0" width="9.6" height="9.6" fill="#000"/>
<rect x="567.6" y="875.0" width="9.6" height="9.6" fill="#000"/>
<rect x="582.6" y="875.0" width="9.6" height="9.6" fill="#000"/>
<rect x="597.6" y="875.0" width="9.6" height="9.6" fill="#000"/>
<path d="M613.4 882.8L621.4 876.8M613.4 878.8L617.4 875.8M617.4 883.8L621.4 880.8M614.4 883.8H616.4M619.4 875.8H621.4" stroke="#111" stroke-width="1.2"/><rect x="616.4" y="878.8" width="2" height="2" fill="#111"/>
<rect x="629.1" y="877.0" width="1.6" height="1.6" fill="#222"/><rect x="629.1" y="881.0" width="1.6" height="1.6" fill="#222"/><rect x="634.1" y="877.0" width="1.6" height="1.6" fill="#222"/><rect x="634.1" y="881.0" width="1.6" height="1.6" fill="#222"/>
<rect x="507.6" y="889.9" width="9.6" height="9.6" fill="#000"/>
<rect x="522.6" y="889.9" width="9.6" height="9.6" fill="#000"/>
<rect x="537.6" y="889.9" width="9.6" height="9.6" fill="#000"/>
<rect x="552.6" y="889.9" width="9.6" height="9.6" fill="#000"/>
<rect x="567.6" y="889.9" width="9.6" height="9.6" fill="#000"/>
<rect x="582.6" y="889.9" width="9.6" height="9.6" fill="#000"/>
<rect x="597.6" y="889.9" width="9.6" height="9.6" fill="#000"/>

<rect x="629.1" y="891.9" width="1.6" height="1.6" fill="#222"/><rect x="629.1" y="895.9" width="1.6" height="1.6" fill="#222"/><rect x="634.1" y="891.9" width="1.6" height="1.6" fill="#222"/><rect x="634.1" y="895.9" width="1.6" height="1.6" fill="#222"/>
<rect x="507.6" y="904.8" width="9.6" height="9.6" fill="#000"/>
<rect x="522.6" y="904.8" width="9.6" height="9.6" fill="#000"/>
<path d="M538.4 912.6L546.4 906.6M538.4 908.6L542.4 905.6M542.4 913.6L546.4 910.6M539.4 913.6H541.4M544.4 905.6H546.4" stroke="#111" stroke-width="1.2"/><rect x="541.4" y="908.6" width="2" height="2" fill="#111"/>
<rect x="556.4" y="908.6" width="2" height="2" fill="#111"/>
<rect x="569.1" y="906.8" width="1.6" height="1.6" fill="#222"/><rect x="569.1" y="910.8" width="1.6" height="1.6" fill="#222"/><rect x="574.1" y="906.8" width="1.6" height="1.6" fill="#222"/><rect x="574.1" y="910.8" width="1.6" height="1.6" fill="#222"/>
<rect x="586.4" y="908.6" width="2" height="2" fill="#111"/>
<rect x="601.4" y="908.6" width="2" height="2" fill="#111"/>

<rect x="631.4" y="908.6" width="2" height="2" fill="#111"/>
<rect x="526.4" y="923.5" width="2" height="2" fill="#111"/>
<rect x="541.4" y="923.5" width="2" height="2" fill="#111"/>
<rect x="556.4" y="923.5" width="2" height="2" fill="#111"/>
<rect x="571.4" y="923.5" width="2" height="2" fill="#111"/>
<rect x="586.4" y="923.5" width="2" height="2" fill="#111"/>
<rect x="601.4" y="923.5" width="2" height="2" fill="#111"/>
<rect x="616.4" y="923.5" width="2" height="2" fill="#111"/>
<rect x="629.1" y="921.7" width="1.6" height="1.6" fill="#222"/><rect x="629.1" y="925.7" width="1.6" height="1.6" fill="#222"/><rect x="634.1" y="921.7" width="1.6" height="1.6" fill="#222"/><rect x="634.1" y="925.7" width="1.6" height="1.6" fill="#222"/>
<rect x="541.4" y="938.4" width="2" height="2" fill="#111"/>
<rect x="556.4" y="938.4" width="2" height="2" fill="#111"/>
<rect x="571.4" y="938.4" width="2" height="2" fill="#111"/>
<rect x="586.4" y="938.4" width="2" height="2" fill="#111"/>
<rect x="601.4" y="938.4" width="2" height="2" fill="#111"/>
<rect x="616.4" y="938.4" width="2" height="2" fill="#111"/>
<rect x="556.4" y="953.3" width="2" height="2" fill="#111"/>
<rect x="571.4" y="953.3" width="2" height="2" fill="#111"/>
<rect x="586.4" y="953.3" width="2" height="2" fill="#111"/>
<path d="M598.4 950.3H606.4M598.4 953.3H606.4M598.4 956.3H606.4M598.4 958.8H606.4M600.4 949.3V959.3M604.4 949.3V959.3" stroke="#000" stroke-width="1.5"/>
<path d="M810.3 827.5V963M734.8 901.9H885.3" stroke="#000" stroke-width="1.6"/>
<rect x="784.8" y="847.2" width="1.6" height="1.6" fill="#222"/><rect x="784.8" y="851.2" width="1.6" height="1.6" fill="#222"/><rect x="789.8" y="847.2" width="1.6" height="1.6" fill="#222"/><rect x="789.8" y="851.2" width="1.6" height="1.6" fill="#222"/>
<rect x="802.1" y="849.0" width="2" height="2" fill="#111"/>
<rect x="817.1" y="849.0" width="2" height="2" fill="#111"/>
<rect x="832.1" y="849.0" width="2" height="2" fill="#111"/>
<rect x="768.3" y="860.1" width="9.6" height="9.6" fill="#000"/>
<rect x="783.3" y="860.1" width="9.6" height="9.6" fill="#000"/>
<rect x="802.1" y="863.9" width="2" height="2" fill="#111"/>
<rect x="817.1" y="863.9" width="2" height="2" fill="#111"/>
<rect x="832.1" y="863.9" width="2" height="2" fill="#111"/>
<rect x="847.1" y="863.9" width="2" height="2" fill="#111"/>
<rect x="753.3" y="875.0" width="9.6" height="9.6" fill="#000"/>
<rect x="768.3" y="875.0" width="9.6" height="9.6" fill="#000"/>
<rect x="783.3" y="875.0" width="9.6" height="9.6" fill="#000"/>
<rect x="798.3" y="875.0" width="9.6" height="9.6" fill="#000"/>
<rect x="813.3" y="875.0" width="9.6" height="9.6" fill="#000"/>
<rect x="828.3" y="875.0" width="9.6" height="9.6" fill="#000"/>
<rect x="844.8" y="877.0" width="1.6" height="1.6" fill="#222"/><rect x="844.8" y="881.0" width="1.6" height="1.6" fill="#222"/><rect x="849.8" y="877.0" width="1.6" height="1.6" fill="#222"/><rect x="849.8" y="881.0" width="1.6" height="1.6" fill="#222"/>
<rect x="862.1" y="878.8" width="2" height="2" fill="#111"/>
<rect x="738.3" y="889.9" width="9.6" height="9.6" fill="#000"/>
<rect x="753.3" y="889.9" width="9.6" height="9.6" fill="#000"/>
<rect x="768.3" y="889.9" width="9.6" height="9.6" fill="#000"/>
<rect x="783.3" y="889.9" width="9.6" height="9.6" fill="#000"/>
<rect x="798.3" y="889.9" width="9.6" height="9.6" fill="#000"/>
<rect x="813.3" y="889.9" width="9.6" height="9.6" fill="#000"/>
<rect x="828.3" y="889.9" width="9.6" height="9.6" fill="#000"/>

<rect x="862.1" y="893.7" width="2" height="2" fill="#111"/>
<rect x="738.3" y="904.8" width="9.6" height="9.6" fill="#000"/>
<rect x="753.3" y="904.8" width="9.6" height="9.6" fill="#000"/>
<rect x="769.8" y="906.8" width="1.6" height="1.6" fill="#222"/><rect x="769.8" y="910.8" width="1.6" height="1.6" fill="#222"/><rect x="774.8" y="906.8" width="1.6" height="1.6" fill="#222"/><rect x="774.8" y="910.8" width="1.6" height="1.6" fill="#222"/>
<rect x="787.1" y="908.6" width="2" height="2" fill="#111"/>
<rect x="802.1" y="908.6" width="2" height="2" fill="#111"/>
<rect x="817.1" y="908.6" width="2" height="2" fill="#111"/>
<rect x="832.1" y="908.6" width="2" height="2" fill="#111"/>

<rect x="862.1" y="908.6" width="2" height="2" fill="#111"/>
<rect x="757.1" y="923.5" width="2" height="2" fill="#111"/>
<rect x="772.1" y="923.5" width="2" height="2" fill="#111"/>
<rect x="787.1" y="923.5" width="2" height="2" fill="#111"/>
<rect x="802.1" y="923.5" width="2" height="2" fill="#111"/>
<rect x="817.1" y="923.5" width="2" height="2" fill="#111"/>
<rect x="832.1" y="923.5" width="2" height="2" fill="#111"/>
<rect x="847.1" y="923.5" width="2" height="2" fill="#111"/>
<rect x="862.1" y="923.5" width="2" height="2" fill="#111"/>
<rect x="772.1" y="938.4" width="2" height="2" fill="#111"/>
<rect x="787.1" y="938.4" width="2" height="2" fill="#111"/>
<rect x="802.1" y="938.4" width="2" height="2" fill="#111"/>
<rect x="817.1" y="938.4" width="2" height="2" fill="#111"/>
<rect x="832.1" y="938.4" width="2" height="2" fill="#111"/>
<rect x="847.1" y="938.4" width="2" height="2" fill="#111"/>
<rect x="787.1" y="953.3" width="2" height="2" fill="#111"/>
<rect x="802.1" y="953.3" width="2" height="2" fill="#111"/>
<rect x="817.1" y="953.3" width="2" height="2" fill="#111"/>
<path d="M829.0999999999999 950.3H837.0999999999999M829.0999999999999 953.3H837.0999999999999M829.0999999999999 956.3H837.0999999999999M829.0999999999999 958.8H837.0999999999999M831.0999999999999 949.3V959.3M835.0999999999999 949.3V959.3" stroke="#000" stroke-width="1.5"/>
<text x="941.6" y="766.4" font-size="11.3" fill="#3a3a3a" text-anchor="start" font-weight="400" textLength="27" lengthAdjust="spacingAndGlyphs">GHT:</text>
<text x="998.3" y="766.4" font-size="11.3" fill="#e36868" text-anchor="start" font-weight="400" textLength="111.4" lengthAdjust="spacingAndGlyphs">Outside Normal Limits</text>
<text x="941.6" y="797" font-size="11.3" fill="#3a3a3a" text-anchor="start" font-weight="400" textLength="21" lengthAdjust="spacingAndGlyphs">VFI:</text>
<text x="998.3" y="797" font-size="11.3" fill="#3434c4" text-anchor="start" font-weight="400" textLength="21.5" lengthAdjust="spacingAndGlyphs">71%</text>
<text x="941.6" y="823.5" font-size="11.3" fill="#3a3a3a" text-anchor="start" font-weight="400" textLength="20.5" lengthAdjust="spacingAndGlyphs">MD:</text>
<text x="998.3" y="823.5" font-size="11.3" fill="#e36868" text-anchor="start" font-weight="400" textLength="91.4" lengthAdjust="spacingAndGlyphs">-9.87 dB P &lt; 0.5%</text>
<text x="941.6" y="836.3" font-size="11.3" fill="#3a3a3a" text-anchor="start" font-weight="400" textLength="26" lengthAdjust="spacingAndGlyphs">PSD:</text>
<text x="998.3" y="836.3" font-size="11.3" fill="#e36868" text-anchor="start" font-weight="400" textLength="93.7" lengthAdjust="spacingAndGlyphs">12.82 dB P &lt; 0.5%</text>
<rect x="1062.7" y="922.9" width="1.6" height="1.6" fill="#222"/><rect x="1062.7" y="926.9" width="1.6" height="1.6" fill="#222"/><rect x="1067.7" y="922.9" width="1.6" height="1.6" fill="#222"/><rect x="1067.7" y="926.9" width="1.6" height="1.6" fill="#222"/>
<path d="M1062 943.7L1070 937.7M1062 939.7L1066 936.7M1066 944.7L1070 941.7M1063 944.7H1065M1068 936.7H1070" stroke="#111" stroke-width="1.2"/><rect x="1065" y="939.7" width="2" height="2" fill="#111"/>
<path d="M1062 951.7H1070M1062 954.7H1070M1062 957.7H1070M1062 960.2H1070M1064 950.7V960.7M1068 950.7V960.7" stroke="#000" stroke-width="1.5"/>
<text x="1082" y="929.7" font-size="11.3" fill="#444" text-anchor="start" font-weight="400" textLength="36" lengthAdjust="spacingAndGlyphs">P &lt; 5%</text>
<text x="1082" y="944.7" font-size="11.3" fill="#444" text-anchor="start" font-weight="400" textLength="36" lengthAdjust="spacingAndGlyphs">P &lt; 2%</text>
<text x="1082" y="959.7" font-size="11.3" fill="#444" text-anchor="start" font-weight="400" textLength="36" lengthAdjust="spacingAndGlyphs">P &lt; 1%</text>
</svg><div class="a" style="left:1142px;top:305px;width:16px;height:658px;background:linear-gradient(90deg,#f3f3f3,#e9e9e9)"></div>
<div class="a" style="left:1149px;top:325px;width:3px;height:550px;background:#8a8a8a"></div>
<svg class="a" style="left:1145px;top:311px" width="10" height="6" viewBox="0 0 10 6"><path d="M0 6H10L5 0Z" fill="#e2e2e2"/></svg>
<svg class="a" style="left:1145px;top:952px" width="10" height="6" viewBox="0 0 10 6"><path d="M0 0H10L5 6Z" fill="#e2e2e2"/></svg>
<svg class="a" style="left:475px;top:973px" width="18" height="18" viewBox="0 0 18 18"><path d="M5 17L2 12Q1 10 3 10L5 12V4Q5 2.5 6.5 3L7 9V2Q8 0.5 9.5 2V8V2.5Q11 1 12 3V9V4Q13.5 3 14.5 5V12L13 17" fill="#fff" stroke="#111" stroke-width="1"/></svg>
<svg class="a" style="left:499px;top:974px" width="17" height="17" viewBox="0 0 17 17"><circle cx="6.5" cy="6.5" r="5.3" fill="#fff" stroke="#111" stroke-width="1.3"/><path d="M10.5 10.5L15.5 15.5" stroke="#7a0a0a" stroke-width="2.6"/></svg>
<svg class="a" style="left:529px;top:974px" width="17" height="17" viewBox="0 0 17 17"><circle cx="6.5" cy="6.5" r="5.3" fill="#fff" stroke="#111" stroke-width="1.3"/><path d="M10.5 10.5L15.5 15.5" stroke="#7a0a0a" stroke-width="2.6"/><path d="M3.5 6.5H9.5M6.5 3.5V9.5" stroke="#111" stroke-width="1.8"/></svg>
<svg class="a" style="left:552px;top:974px" width="17" height="17" viewBox="0 0 17 17"><circle cx="6.5" cy="6.5" r="5.3" fill="#fff" stroke="#111" stroke-width="1.3"/><path d="M10.5 10.5L15.5 15.5" stroke="#7a0a0a" stroke-width="2.6"/><path d="M3.5 6.5H9.5" stroke="#111" stroke-width="1.8"/></svg>
<div class="a" style="left:581px;top:972px;width:50px;height:22px;background:#fff;border:1px solid #7a7a7a;border-radius:2px"></div>
<span class="t" style="left:587px;top:977px;font-size:12px;color:#111;">Auto</span>
<svg class="a" style="left:616px;top:981px" width="9" height="6" viewBox="0 0 9 6"><path d="M0.5 0.5L4.5 4.5L8.5 0.5" fill="none" stroke="#444" stroke-width="1"/></svg>
<svg class="a" style="left:654px;top:975px" width="16" height="14" viewBox="0 0 16 14"><path d="M1.5 3V11M14.5 3V11M1.5 7H14.5" stroke="#1a1ac8" stroke-width="1.3"/></svg>
<svg class="a" style="left:676px;top:975px" width="17" height="14" viewBox="0 0 17 14"><path d="M9 12.5Q8.5 10 6 10Q1.5 10.5 1.5 7Q1.5 3 8 3Q15 3 15 7.5Q15 11 12 11.5" fill="none" stroke="#1a1ac8" stroke-width="1.3"/></svg>
<svg class="a" style="left:702px;top:975px" width="13" height="13" viewBox="0 0 13 13"><path d="M2 12L11 3M6 3H11V8" fill="none" stroke="#1a1ac8" stroke-width="1.2"/></svg>
<svg class="a" style="left:724px;top:974px" width="14" height="16" viewBox="0 0 14 16"><text x="7" y="14" font-size="16" font-family="Liberation Serif" font-weight="700" font-style="italic" text-anchor="middle" fill="#1a1ac8">T</text></svg>
<svg class="a" style="left:747px;top:973px" width="15" height="17" viewBox="0 0 15 17"><circle cx="7.5" cy="8.5" r="4.8" fill="none" stroke="#1a1ac8" stroke-width="1.3"/><path d="M1.5 15.5L13.5 1.5" stroke="#1a1ac8" stroke-width="1.1"/></svg>
<svg class="a" style="left:770px;top:974px" width="15" height="15" viewBox="0 0 15 15"><ellipse cx="7.5" cy="7.5" rx="6" ry="6.5" fill="#999"/><path d="M1 1L14 14M14 1L1 14M0 7.5H15" stroke="#aaa" stroke-width="1"/></svg>
<svg class="a" style="left:838px;top:974px" width="17" height="17" viewBox="0 0 17 17"><rect x="0.8" y="0.8" width="15.4" height="15.4" rx="2" fill="#fff" stroke="#000" stroke-width="1.6"/><text x="8.5" y="13" font-size="12" font-weight="700" font-family="Liberation Sans" text-anchor="middle" fill="#000" transform="rotate(180 8.5 8.5) translate(0,-0.5)">R</text></svg>
<div class="a" style="left:469px;top:1060px;width:695px;height:1px;background:#dcdcdc"></div>
<span class="t fit" style="left:470px;top:1065px;font-size:12.5px;color:#111;--w:356px">ALT to change contrast, CTRL for zoom mode, SHIFT for pan mode.</span>
<span class="t fit" style="left:957px;top:1065px;font-size:12.5px;color:#111;--w:99px">Image: 2028 x 2269</span>
<svg class="a" style="left:1153px;top:1067px" width="9" height="9" viewBox="0 0 9 9"><path d="M8 2V3M5 5V6M8 5V6M2 8V9M5 8V9M8 8V9" stroke="#aaa" stroke-width="1.2"/></svg>
<div class="a" style="left:1172px;top:178px;width:674px;height:899px;background:#f0f0f0;border-radius:8px;box-shadow:0 0 0 1px rgba(0,0,0,0.25)"></div>
<svg class="a" style="left:1180px;top:184px" width="16" height="16" viewBox="0 0 16 16"><rect x="0" y="0" width="16" height="16" fill="#000"/><path d="M9 2H14V8L12 7L10 5L8.5 4Z" fill="#d8d8d8"/><path d="M2 9L4 10L6 9.5L8 11.5L11 10L14 7V13.5H2Z" fill="#a8a8a8"/><path d="M2 12.2H14V13.8H2Z" fill="#f4f4f4"/><path d="M11 11L14 8V12Z" fill="#eee"/><rect x="2" y="2" width="2" height="1" fill="#999"/></svg>
<span class="t fit" style="left:1202px;top:186px;font-size:12.5px;color:#7c7c7c;--w:503px">Glaucoma Imaging Atlas, Chapter - 8, Case - 06, 01/01/1955, Samuels, Girkin&nbsp; |&nbsp; Exam: 21/04/2...</span>
<div class="a" style="left:1727px;top:192px;width:11px;height:1px;background:#666"></div>
<div class="a" style="left:1772px;top:187px;width:10px;height:10px;border:1px solid #666"></div>
<svg class="a" style="left:1817px;top:186px" width="12" height="12" viewBox="0 0 12 12"><path d="M0.5 0.5L11.5 11.5M11.5 0.5L0.5 11.5" stroke="#666" stroke-width="1"/></svg>
<div class="a" style="left:1172px;top:207px;width:674px;height:19px;background:linear-gradient(90deg,#fff 0%,#fff 80%,#f7f7f7)"></div>
<span class="t" style="left:1179px;top:211px;font-size:12.2px;color:#5a5a5a;">Image</span>
<span class="t" style="left:1226px;top:211px;font-size:12.2px;color:#5a5a5a;">Progression</span>
<span class="t" style="left:1302px;top:211px;font-size:12.2px;color:#5a5a5a;">Options</span>
<span class="t" style="left:1358px;top:211px;font-size:12.2px;color:#5a5a5a;">HRA Image</span>
<span class="t" style="left:1432px;top:211px;font-size:12.2px;color:#5a5a5a;">Overlay</span>
<span class="t" style="left:1486px;top:211px;font-size:12.2px;color:#5a5a5a;">Window</span>
<svg class="a" style="left:1179px;top:233px" width="27" height="27" viewBox="0 0 27 27"><circle cx="13" cy="13" r="11.5" fill="url(#gwhite)" stroke="#111" stroke-width="1.6"/><path d="M13 2A11 11 0 0 1 13 24Z" fill="#000"/><path d="M24 15A11.5 11.5 0 0 1 6 22" fill="none" stroke="#999" stroke-width="1.2" transform="translate(1,1.5)"/></svg>
<svg class="a" style="left:1215px;top:232px" width="33" height="33" viewBox="0 0 33 33"><path d="M16 2C7 2 1.5 7 1.5 13.5C1.5 19 6 23 12 24L16 31L18 24C26 23 31 19 31 13.5C31 7 25 2 16 2Z" fill="url(#gwhite)" stroke="#333" stroke-width="1"/><path d="M31.5 14C31 20 27 24 19 25L17 31" fill="none" stroke="#999" stroke-width="1.6"/><circle cx="15.5" cy="7.5" r="2" fill="#1a1ae6"/><path d="M12 11H17V19H19V21H12V19H14V13H12Z" fill="#1a1ae6"/></svg>
<div class="a" style="left:1253px;top:229px;width:1px;height:37px;background:#a8a8a8"></div>
<svg class="a" style="left:1260px;top:232px" width="32" height="32" viewBox="0 0 32 32"><path d="M1 2Q1 1 2 1H30Q31 1 31 2V30Q31 31 30 31H5L1 27Z" fill="#5a6ef0" stroke="#3d4fc9" stroke-width="0.8"/><rect x="6" y="2" width="20" height="14" fill="#fff"/><path d="M7 4.5H25M7 7H25M7 9.5H25M7 12H25" stroke="#bbb" stroke-width="0.8"/><rect x="9" y="21" width="14" height="9" fill="#e8e8f8"/><rect x="11" y="22.5" width="3" height="6" fill="#3d4fc9"/><rect x="2.5" y="2.5" width="1.3" height="1.3" fill="#223"/><rect x="28" y="2.5" width="1.3" height="1.3" fill="#223"/></svg>
<svg class="a" style="left:1299px;top:233px" width="31" height="32" viewBox="0 0 31 32"><rect x="7" y="1" width="17" height="11" fill="#f4f4f4" stroke="#666" stroke-width="0.8"/><path d="M1 12H30V24H1Z" fill="url(#gprint)" stroke="#555" stroke-width="0.8"/><rect x="5" y="16" width="21" height="2" fill="#5a5ac8"/><rect x="6" y="20" width="19" height="11" fill="#fff" stroke="#333" stroke-width="1"/><path d="M9 24H17M9 26.5H21M19 24H22" stroke="#333" stroke-width="0.9"/></svg>
<div class="a" style="left:1337px;top:229px;width:1px;height:37px;background:#a8a8a8"></div>
<svg class="a" style="left:1349px;top:238px" width="23" height="20" viewBox="0 0 23 20"><path d="M0.5 10L9 1V6H22V14H9V19Z" fill="#8a8a8a" stroke="#777" stroke-width="0.6"/></svg>
<svg class="a" style="left:1386px;top:238px" width="24" height="20" viewBox="0 0 24 20"><path d="M23 10L14.5 1V6H1V14H14.5V19Z" fill="#000" stroke="#222" stroke-width="0.6"/></svg>
<div class="a" style="left:1421px;top:229px;width:1px;height:37px;background:#a8a8a8"></div>
<svg class="a" style="left:1430px;top:233px" width="31" height="30" viewBox="0 0 31 30"><rect x="2" y="2" width="28" height="27" fill="#555"/><rect x="0.8" y="0.8" width="28" height="27" fill="#fff" stroke="#000" stroke-width="1.6"/><rect x="1.6" y="1.6" width="26.4" height="2.6" fill="#0000d0"/><rect x="1.6" y="4.2" width="26.4" height="2" fill="#a8a8a8"/><path d="M14.5 6V19" stroke="#aaa" stroke-width="0.8"/><path d="M1.6 19H28" stroke="#999" stroke-width="0.8"/><rect x="3.5" y="9" width="3" height="2.6" fill="none" stroke="#333" stroke-width="0.8"/><rect x="8" y="9" width="3" height="2.6" fill="none" stroke="#333" stroke-width="0.8"/><rect x="16.5" y="9" width="3" height="2.6" fill="none" stroke="#333" stroke-width="0.8"/><rect x="21" y="9" width="3" height="2.6" fill="none" stroke="#333" stroke-width="0.8"/><path d="M17.5 14V21H15L19 26L23 21H20.5V14Z" fill="#e00000"/></svg>
<div class="a" style="left:1467px;top:229px;width:1px;height:37px;background:#a8a8a8"></div>
<svg class="a" style="left:1476px;top:235px" width="29" height="27" viewBox="0 0 29 27"><path d="M2 2Q6 0 10 4Q14 8 16 11Q20 5 28 1Q22 6 18 14Q21 19 24 25Q19 21 15 16Q10 22 3 26Q8 19 12.5 13Q8 7 2 2Z" fill="#ef4a55"/></svg>
<div class="a" style="left:1513px;top:229px;width:1px;height:37px;background:#a8a8a8"></div>
<svg class="a" style="left:1523px;top:234px" width="28" height="28" viewBox="0 0 28 28"><rect x="6" y="0.5" width="16" height="16" fill="#fff" stroke="#bbb" stroke-width="0.8"/><rect x="3" y="4" width="16" height="16" fill="#fff" stroke="#bbb" stroke-width="0.8"/><rect x="0.5" y="8" width="16" height="16" fill="#fff" stroke="#bbb" stroke-width="0.8"/><path d="M17 9V26H3" fill="none" stroke="#ccc" stroke-width="2"/><path d="M26 17L19 24M19 20V25H24" fill="none" stroke="#999" stroke-width="1.8"/></svg>
<svg class="a" style="left:1561px;top:234px" width="28" height="28" viewBox="0 0 28 28"><rect x="6" y="0.5" width="16" height="16" fill="#fff" stroke="#bbb" stroke-width="0.8"/><rect x="3" y="4" width="16" height="16" fill="#fff" stroke="#bbb" stroke-width="0.8"/><rect x="0.5" y="8" width="16" height="16" fill="#fff" stroke="#bbb" stroke-width="0.8"/><path d="M17 9V26H3" fill="none" stroke="#ccc" stroke-width="2"/><path d="M19 25L26 18M21 18H26V23" fill="none" stroke="#999" stroke-width="1.8"/></svg>
<div class="a" style="left:1173px;top:275px;width:50px;height:21px;background:#f8f8f8"></div>
<span class="t" style="left:1178px;top:280px;font-size:11.5px;color:#111;">Display</span>
<div class="a" style="left:1177px;top:301px;width:645px;height:660px;background:#fff;border-top:2px solid #7a7a7a;border-left:2px solid #7a7a7a;border-right:1px solid #e6e6e6;border-bottom:1px solid #e0e0e0"></div>
<div class="a" style="left:1179px;top:311px;width:642px;height:642px;background:#000"></div>
<svg class="a" style="left:1179px;top:311px" width="642" height="642" viewBox="1179 311 642 642">
<defs>
 <radialGradient id="fbase" cx="1530" cy="640" r="320" gradientUnits="userSpaceOnUse" gradientTransform="translate(1530 640) scale(1 1.267) translate(-1530 -640)">
  <stop offset="0" stop-color="#d8783c"/>
  <stop offset="0.26" stop-color="#d27538"/>
  <stop offset="0.4" stop-color="#bb6a35"/>
  <stop offset="0.56" stop-color="#9e5f31"/>
  <stop offset="0.7" stop-color="#925a30"/>
  <stop offset="0.84" stop-color="#82552e"/>
  <stop offset="1" stop-color="#74502c"/>
 </radialGradient>
 <radialGradient id="fdark" cx="0.5" cy="0.5" r="0.5">
  <stop offset="0" stop-color="#5a3a20" stop-opacity="0.3"/>
  <stop offset="1" stop-color="#5a3a20" stop-opacity="0"/>
 </radialGradient>
 <radialGradient id="fdisc" cx="0.5" cy="0.5" r="0.5">
  <stop offset="0" stop-color="#fff8d8"/>
  <stop offset="0.45" stop-color="#ffe8b0"/>
  <stop offset="0.7" stop-color="#f4b078"/>
  <stop offset="1" stop-color="#e08850" stop-opacity="0"/>
 </radialGradient>
 <radialGradient id="fmac" cx="0.5" cy="0.5" r="0.5">
  <stop offset="0" stop-color="#82401a" stop-opacity="0.9"/>
  <stop offset="0.5" stop-color="#94501f" stop-opacity="0.5"/>
  <stop offset="1" stop-color="#a0602a" stop-opacity="0"/>
 </radialGradient>
 <radialGradient id="fglow" cx="0.5" cy="0.5" r="0.5">
  <stop offset="0" stop-color="#e39050" stop-opacity="0.55"/>
  <stop offset="1" stop-color="#e39050" stop-opacity="0"/>
 </radialGradient>
 <radialGradient id="fmute" cx="0.5" cy="0.5" r="0.5">
  <stop offset="0" stop-color="#8a7040" stop-opacity="0.45"/>
  <stop offset="1" stop-color="#8a7040" stop-opacity="0"/>
 </radialGradient>
 <clipPath id="fclip"><circle cx="1500" cy="632" r="298"/><path d="M1695 413 Q1700 410 1712 409 Q1718 409 1722 413 L1728 420 Q1729 425 1728.5 430 L1728 442 L1700 440Z"/></clipPath>
 <filter id="fblur" x="-5%" y="-5%" width="110%" height="110%"><feGaussianBlur stdDeviation="0.9"/></filter><filter id="fblur2b" x="-30%" y="-30%" width="160%" height="160%"><feGaussianBlur stdDeviation="4.5"/></filter><filter id="fblur2" x="-50%" y="-50%" width="200%" height="200%"><feGaussianBlur stdDeviation="6"/></filter>
</defs>
<g clip-path="url(#fclip)">
 <rect x="1179" y="311" width="642" height="642" fill="url(#fbase)"/>
 <ellipse cx="1545" cy="790" rx="60" ry="110" fill="url(#fglow)" opacity="0.5"/>
 <g filter="url(#fblur2b)" opacity="0.3" stroke="#e8904c" fill="none" stroke-linecap="round">
  <path d="M1535 700 C1545 760 1560 830 1572 920" stroke-width="9"/>
  <path d="M1470 720 C1500 745 1520 760 1545 770" stroke-width="6"/>
  <path d="M1590 690 C1600 720 1610 760 1625 800" stroke-width="6"/>
  <path d="M1430 830 C1460 810 1490 800 1520 790" stroke-width="5"/>
  <path d="M1700 680 C1720 720 1730 760 1745 820" stroke-width="6"/>
  <path d="M1660 700 C1680 750 1690 800 1700 860" stroke-width="5"/>
 </g>
 <ellipse cx="1310" cy="450" rx="110" ry="110" fill="url(#fdark)"/>
 <ellipse cx="1740" cy="760" rx="80" ry="110" fill="url(#fmute)" opacity="0.5"/>
 <ellipse cx="1700" cy="480" rx="80" ry="90" fill="url(#fmute)" opacity="0.4"/>
 <ellipse cx="1420" cy="630" rx="45" ry="40" fill="url(#fdark)" opacity="0.8"/>
 <ellipse cx="1415" cy="633" rx="24" ry="22" fill="url(#fmac)" opacity="0.85"/>
 <g filter="url(#fblur)"><path d="M1638 593 C1635 560 1634 530 1622 497 C1610 485 1595 480 1578 476 C1565 455 1555 438 1539 434 C1525 425 1512 420 1500 418 C1476 405 1450 402 1416 405 C1395 395 1370 388 1340 382 C1325 378 1300 372 1290 368" fill="none" stroke="#7a2c20" stroke-width="4.0" stroke-opacity="0.72" stroke-linecap="round"/><path d="M1578 476 C1572 455 1560 426 1534 395 C1520 380 1510 372 1500 366 C1485 350 1475 340 1471 338" fill="none" stroke="#7a2c20" stroke-width="3.8" stroke-opacity="0.72" stroke-linecap="round"/><path d="M1640 593 C1648 550 1652 490 1656 434 C1658 410 1660 395 1661 387" fill="none" stroke="#7a2c20" stroke-width="3.0" stroke-opacity="0.72" stroke-linecap="round"/><path d="M1641 611 C1655 595 1669 577 1703 523 C1712 500 1721 476 1729 450" fill="none" stroke="#7a2c20" stroke-width="2.6" stroke-opacity="0.65" stroke-linecap="round"/><path d="M1646 616 C1665 600 1682 588 1734 559 C1755 548 1770 542 1781 538" fill="none" stroke="#7a2c20" stroke-width="2.6" stroke-opacity="0.65" stroke-linecap="round"/><path d="M1630 665 C1635 680 1638 690 1643 729 C1643 750 1640 765 1635 776 C1625 800 1615 817 1591 854 C1585 866 1581 880 1578 916" fill="none" stroke="#7a2c20" stroke-width="4.2" stroke-opacity="0.78" stroke-linecap="round"/><path d="M1578 880 C1560 886 1539 893 1500 909 C1470 905 1434 903 1382 890 C1365 890 1356 888 1353 864 L1361 846 C1380 843 1395 841 1434 828 C1460 815 1473 810 1500 792 C1540 770 1560 760 1591 721 C1600 705 1610 690 1615 677" fill="none" stroke="#7a2c20" stroke-width="2.4" stroke-opacity="0.59" stroke-linecap="round"/><path d="M1361 846 C1345 832 1330 818 1304 804 C1290 798 1275 792 1265 789 C1262 770 1265 760 1283 721 C1290 705 1298 695 1304 690" fill="none" stroke="#7a2c20" stroke-width="2.2" stroke-opacity="0.52" stroke-linecap="round"/><path d="M1413 421 C1408 435 1400 447 1382 476 C1372 490 1369 497 1367 528 C1370 545 1378 555 1387 577" fill="none" stroke="#7a2c20" stroke-width="2.2" stroke-opacity="0.59" stroke-linecap="round"/><path d="M1286 432 C1305 445 1330 463 1377 486 C1390 490 1400 488 1408 486 C1415 475 1421 465 1434 445 C1440 438 1450 437 1481 442 C1490 443 1495 444 1500 445" fill="none" stroke="#7a2c20" stroke-width="2.2" stroke-opacity="0.59" stroke-linecap="round"/><path d="M1377 486 C1365 500 1356 512 1335 543 C1333 555 1335 564 1356 570" fill="none" stroke="#7a2c20" stroke-width="1.9" stroke-opacity="0.52" stroke-linecap="round"/><path d="M1440 499 C1450 480 1460 465 1481 447" fill="none" stroke="#7a2c20" stroke-width="1.9" stroke-opacity="0.45" stroke-linecap="round"/><path d="M1500 452 C1520 462 1540 472 1575 476" fill="none" stroke="#7a2c20" stroke-width="2.2" stroke-opacity="0.59" stroke-linecap="round"/><path d="M1460 692 C1440 700 1420 703 1408 706 M1500 674 C1480 683 1470 688 1460 692" fill="none" stroke="#7a2c20" stroke-width="1.9" stroke-opacity="0.45" stroke-linecap="round"/><path d="M1600 640 C1570 650 1540 660 1500 680 C1480 690 1470 700 1455 715" fill="none" stroke="#7a2c20" stroke-width="2.0" stroke-opacity="0.45" stroke-linecap="round"/><path d="M1655 675 C1665 700 1675 730 1685 760 C1690 780 1695 800 1690 830" fill="none" stroke="#7a2c20" stroke-width="1.8" stroke-opacity="0.39" stroke-linecap="round"/><path d="M1680 660 C1710 680 1730 690 1760 720" fill="none" stroke="#7a2c20" stroke-width="1.8" stroke-opacity="0.39" stroke-linecap="round"/></g>
 <ellipse cx="1588" cy="625" rx="10" ry="34" fill="#6a6a40" opacity="0.35" filter="url(#fblur2)"/>
 <ellipse cx="1640" cy="625" rx="28" ry="42" fill="#e8806a" opacity="0.55" filter="url(#fblur2)"/>
 <ellipse cx="1618" cy="620" rx="27" ry="40" fill="#f0a070" opacity="0.7" filter="url(#fblur2)"/>
 <ellipse cx="1618" cy="620" rx="21" ry="33" fill="#f8eaa8" filter="url(#fblur)"/>
 <ellipse cx="1625" cy="616" rx="11" ry="16" fill="#fafac0" opacity="0.8" filter="url(#fblur2)"/>
 <path d="M1690 584 C1665 595 1652 605 1647 625 C1643 645 1636 655 1630 665" stroke="#b03a28" stroke-width="3" fill="none" opacity="0.55" filter="url(#fblur)"/>
 <path d="M1637 570 L1636 596" stroke="#b03a28" stroke-width="2.5" fill="none" opacity="0.5"/>
 <ellipse cx="1685" cy="633" rx="5" ry="5" fill="#a8b8c0" opacity="0.35" filter="url(#fblur)"/>
</g>
</svg>
<svg class="a" style="left:1179px;top:971px" width="18" height="18" viewBox="0 0 18 18"><path d="M5 17L2 12Q1 10 3 10L5 12V4Q5 2.5 6.5 3L7 9V2Q8 0.5 9.5 2V8V2.5Q11 1 12 3V9V4Q13.5 3 14.5 5V12L13 17" fill="#fff" stroke="#111" stroke-width="1"/></svg>
<svg class="a" style="left:1203px;top:972px" width="17" height="17" viewBox="0 0 17 17"><circle cx="6.5" cy="6.5" r="5.3" fill="#fff" stroke="#111" stroke-width="1.3"/><path d="M10.5 10.5L15.5 15.5" stroke="#7a0a0a" stroke-width="2.6"/></svg>
<svg class="a" style="left:1233px;top:972px" width="17" height="17" viewBox="0 0 17 17"><circle cx="6.5" cy="6.5" r="5.3" fill="#fff" stroke="#111" stroke-width="1.3"/><path d="M10.5 10.5L15.5 15.5" stroke="#7a0a0a" stroke-width="2.6"/><path d="M3.5 6.5H9.5M6.5 3.5V9.5" stroke="#111" stroke-width="1.8"/></svg>
<svg class="a" style="left:1256px;top:972px" width="17" height="17" viewBox="0 0 17 17"><circle cx="6.5" cy="6.5" r="5.3" fill="#fff" stroke="#111" stroke-width="1.3"/><path d="M10.5 10.5L15.5 15.5" stroke="#7a0a0a" stroke-width="2.6"/><path d="M3.5 6.5H9.5" stroke="#111" stroke-width="1.8"/></svg>
<div class="a" style="left:1285px;top:970px;width:50px;height:22px;background:#fff;border:1px solid #7a7a7a;border-radius:2px"></div>
<span class="t" style="left:1291px;top:975px;font-size:12px;color:#111;">Auto</span>
<svg class="a" style="left:1320px;top:979px" width="9" height="6" viewBox="0 0 9 6"><path d="M0.5 0.5L4.5 4.5L8.5 0.5" fill="none" stroke="#444" stroke-width="1"/></svg>
<svg class="a" style="left:1358px;top:973px" width="16" height="14" viewBox="0 0 16 14"><path d="M1.5 3V11M14.5 3V11M1.5 7H14.5" stroke="#1a1ac8" stroke-width="1.3"/></svg>
<svg class="a" style="left:1380px;top:973px" width="17" height="14" viewBox="0 0 17 14"><path d="M9 12.5Q8.5 10 6 10Q1.5 10.5 1.5 7Q1.5 3 8 3Q15 3 15 7.5Q15 11 12 11.5" fill="none" stroke="#1a1ac8" stroke-width="1.3"/></svg>
<svg class="a" style="left:1406px;top:973px" width="13" height="13" viewBox="0 0 13 13"><path d="M2 12L11 3M6 3H11V8" fill="none" stroke="#1a1ac8" stroke-width="1.2"/></svg>
<svg class="a" style="left:1428px;top:972px" width="14" height="16" viewBox="0 0 14 16"><text x="7" y="14" font-size="16" font-family="Liberation Serif" font-weight="700" font-style="italic" text-anchor="middle" fill="#1a1ac8">T</text></svg>
<svg class="a" style="left:1451px;top:971px" width="15" height="17" viewBox="0 0 15 17"><circle cx="7.5" cy="8.5" r="4.8" fill="none" stroke="#1a1ac8" stroke-width="1.3"/><path d="M1.5 15.5L13.5 1.5" stroke="#1a1ac8" stroke-width="1.1"/></svg>
<svg class="a" style="left:1474px;top:972px" width="15" height="15" viewBox="0 0 15 15"><ellipse cx="7.5" cy="7.5" rx="6" ry="6.5" fill="#999"/><path d="M1 1L14 14M14 1L1 14M0 7.5H15" stroke="#aaa" stroke-width="1"/></svg>
<svg class="a" style="left:1542px;top:972px" width="17" height="17" viewBox="0 0 17 17"><rect x="0.8" y="0.8" width="15.4" height="15.4" rx="2" fill="#fff" stroke="#000" stroke-width="1.6"/><text x="8.5" y="13" font-size="12" font-weight="700" font-family="Liberation Sans" text-anchor="middle" fill="#000" transform="rotate(180 8.5 8.5) translate(0,-0.5)">R</text></svg>
<div class="a" style="left:1173px;top:1058px;width:672px;height:1px;background:#dcdcdc"></div>
<span class="t fit" style="left:1174px;top:1063px;font-size:12.5px;color:#111;--w:244px">ALT to change contrast, CTRL for zoom mode.</span>
<span class="t fit" style="left:1661px;top:1063px;font-size:12.5px;color:#111;--w:99px">Image: 2976 x 2976</span>
<svg class="a" style="left:1834px;top:1065px" width="9" height="9" viewBox="0 0 9 9"><path d="M8 2V3M5 5V6M8 5V6M2 8V9M5 8V9M8 8V9" stroke="#aaa" stroke-width="1.2"/></svg>
<div class="a" style="left:463px;top:1081px;width:1452px;height:3px;background:#5a5a5a"></div>
<div class="a" style="left:463px;top:1084px;width:1452px;height:1px;background:#1e1e1e"></div>
<div class="a" style="left:463px;top:1085px;width:1452px;height:22px;background:#4a4846"></div>
<div class="a" style="left:1915px;top:1081px;width:3px;height:29px;background:#9a9a9a"></div>
<div class="a" style="left:469px;top:1085px;width:104px;height:20px;background:linear-gradient(#a5a5a5,#e8e8e8 35%,#f2f2f2);border:1px solid #555;border-top:0;border-radius:0 0 2px 2px"></div>
<span class="t" style="left:471px;top:1089px;font-size:12.5px;color:#111;">Series thumbnails</span>
<div class="a" style="left:575px;top:1085px;width:40px;height:20px;background:linear-gradient(#505050,#5a5a5a);border:1px solid #333;border-top:0"></div>
<span class="t" style="left:578px;top:1089px;font-size:12.5px;color:#eee;">Series</span>
<div class="a" style="left:617px;top:1085px;width:142px;height:20px;background:linear-gradient(#c8a860,#ecd080 40%,#eccd80);border:1px solid #555;border-top:0;border-radius:0 0 2px 2px"></div>
<span class="t" style="left:619px;top:1089px;font-size:12.5px;color:#222;">Reports / Documents (4)</span>


<!-- STATUS -->
<div class="a" style="left:0;top:1130px;width:1918px;height:1px;background:#111"></div>
<div class="a" style="left:0;top:1131px;width:1918px;height:21px;background:linear-gradient(#3a3a3a,#3a3a3a 1px,#262524 2px,#1e1e1e)"></div>
<svg class="a" style="left:6px;top:1135px" width="22" height="15" viewBox="0 0 22 15"><path d="M8.5 1.5A6 6 0 0 0 8.5 13.5" fill="none" stroke="#fff" stroke-width="1.6"/><path d="M20 1.5A6 6 0 0 0 20 13.5M14.5 7.5H19.5" fill="none" stroke="#fff" stroke-width="1.6"/></svg>
<span class="t" style="left:35px;top:1136px;font-size:13px;color:#9a9a9a">0123</span>
<div class="a" style="left:76px;top:1135px;width:22px;height:15px;border:1px solid #ddd"></div>
<span class="t" style="left:78px;top:1137px;font-size:10px;font-weight:700;color:#fff">MD</span>
<span class="t" style="left:105px;top:1137px;font-size:12.5px;color:#fff">2 patients</span>
<span class="t" style="left:355px;top:1137px;font-size:12.5px;color:#fff">User sysadmin</span>
<span class="t fit" style="left:455px;top:1137px;font-size:12.5px;color:#fff;--w:198px">UK-HH-HE-LT-004 UK-HH-HE-LT-004</span>
<div class="a" style="left:658px;top:1148px;width:15px;height:1px;background:#ddd"></div>


<script>
document.querySelectorAll('.fit').forEach(function(e){
  var w=parseFloat(getComputedStyle(e).getPropertyValue('--w'));
  if(!w)return;
  var n=e.getBoundingClientRect().width;
  if(n>0)e.style.transform='scaleX('+(w/n)+')';
});
</script>
</body></html>
